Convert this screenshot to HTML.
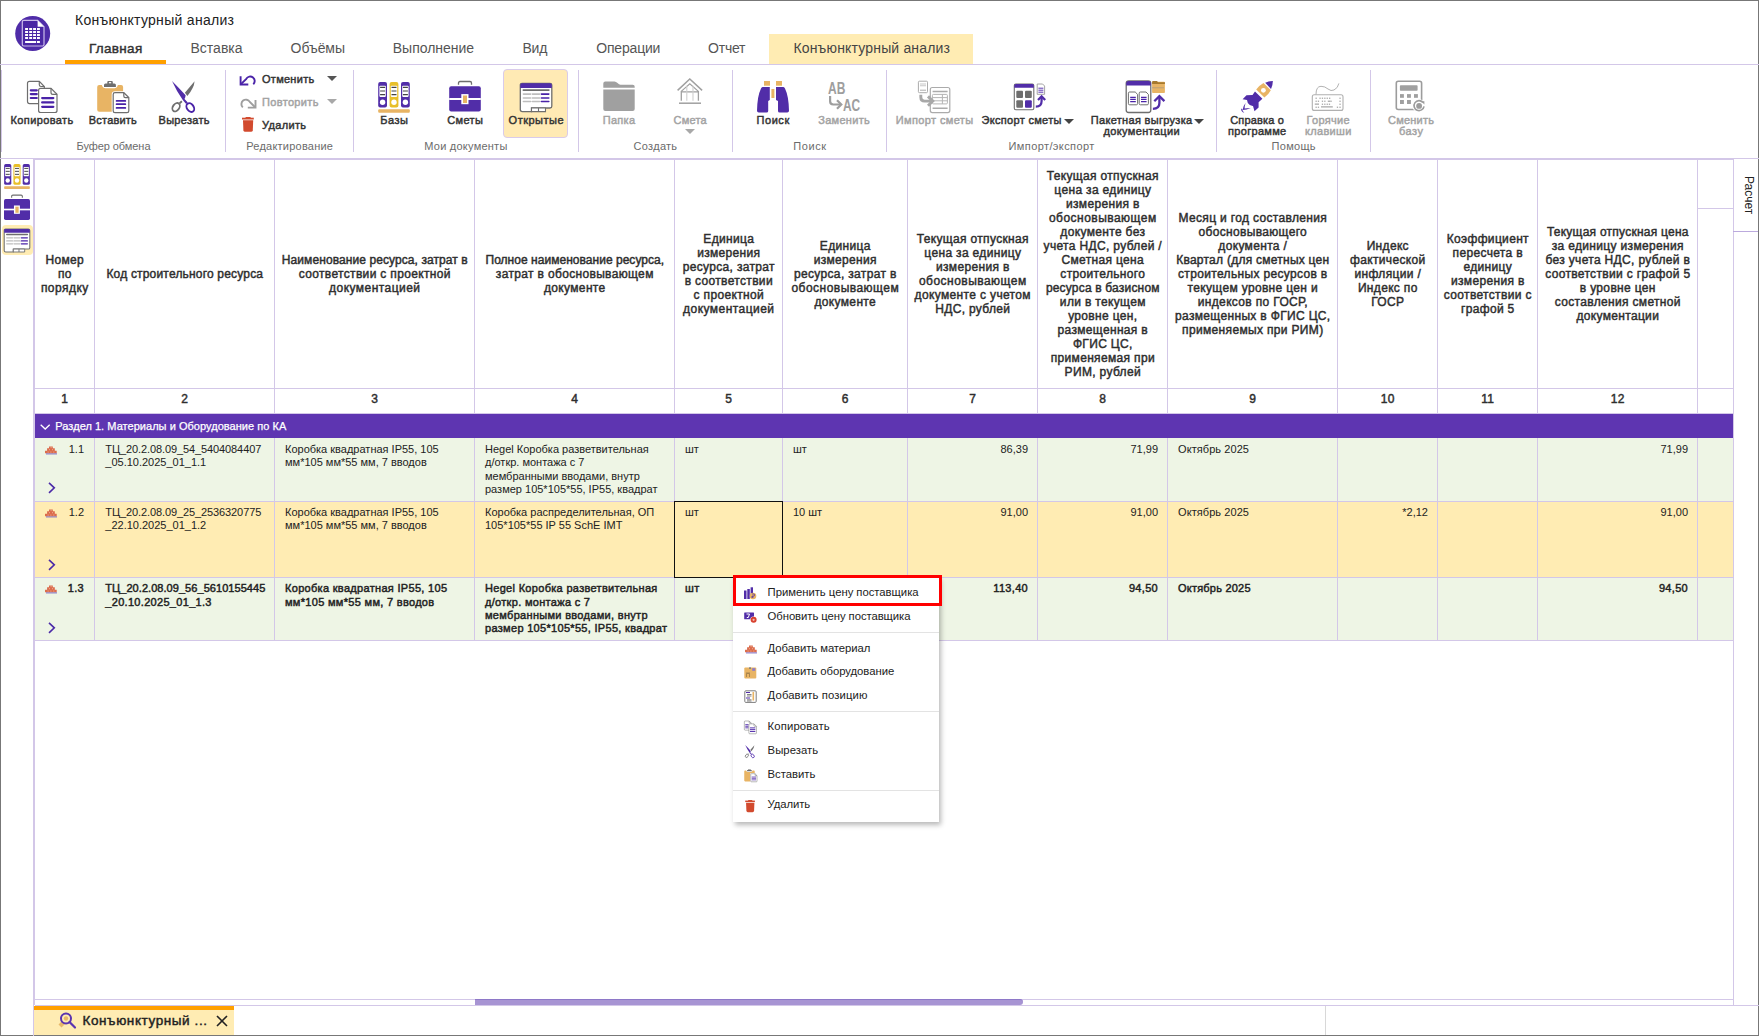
<!DOCTYPE html>
<html><head><meta charset="utf-8"><style>
html,body{margin:0;padding:0;}
body{width:1759px;height:1036px;position:relative;overflow:hidden;background:#fff;font-family:"Liberation Sans", sans-serif;}
</style></head><body>
<div style="position:absolute;left:0px;top:0px;width:1759px;height:1px;background:#777;"></div>
<div style="position:absolute;left:0px;top:0px;width:1px;height:1036px;background:#777;"></div>
<div style="position:absolute;left:1758px;top:0px;width:1px;height:1036px;background:#777;"></div>
<div style="position:absolute;left:0px;top:1035px;width:1759px;height:1px;background:#777;"></div>
<svg style="position:absolute;left:15px;top:16px" width="36" height="36" viewBox="0 0 36 36">
<circle cx="17.7" cy="17.5" r="17.5" fill="#4F2CA8"/>
<path d="M8.8 4.3 H22.6 L29 10.7 V28.5 Q29 30 27.5 30 H8.8 Q7.3 30 7.3 28.5 V5.8 Q7.3 4.3 8.8 4.3 Z" fill="#4A27A4" stroke="#CBBDEA" stroke-width="1.2"/>
<path d="M22.6 4.3 V10.7 H29 Z" fill="#fff"/>
<g fill="#fff">
<rect x="10.1" y="12" width="2.9" height="2"/><rect x="14.2" y="12" width="2.9" height="2"/><rect x="18.1" y="12" width="2.9" height="2"/><rect x="22" y="12" width="2.9" height="2"/>
<rect x="10.1" y="15" width="2.9" height="2"/><rect x="14.2" y="15" width="2.9" height="2"/><rect x="18.1" y="15" width="2.9" height="2"/><rect x="22" y="15" width="2.9" height="2"/>
<rect x="10.1" y="18" width="2.9" height="2"/><rect x="14.2" y="18" width="2.9" height="2"/><rect x="18.1" y="18" width="2.9" height="2"/><rect x="22" y="18" width="2.9" height="2"/>
<rect x="10.1" y="21" width="2.9" height="2"/><rect x="14.2" y="21" width="2.9" height="2"/><rect x="18.1" y="21" width="2.9" height="2"/><rect x="22" y="21" width="2.9" height="2"/>
<rect x="10.1" y="25" width="11" height="2"/><rect x="22" y="25" width="2.9" height="2"/>
</g></svg>
<div id="t0" style="position:absolute;top:12.25px;font-size:14px;line-height:16.8px;font-weight:400;color:#222;white-space:nowrap;letter-spacing:0.297px;left:75px;"><span>Конъюнктурный анализ</span></div>
<div style="position:absolute;left:65px;top:60px;width:101px;height:4px;background:#FFA000;"></div>
<div style="position:absolute;left:769px;top:34px;width:204px;height:30px;background:#FFECB3;"></div>
<div id="t1" style="position:absolute;top:40.72px;font-size:13.5px;line-height:16.2px;font-weight:400;-webkit-text-stroke:0.45px #333;color:#333;white-space:nowrap;letter-spacing:0.301px;left:89px;"><span>Главная</span></div>
<div id="t2" style="position:absolute;top:40.25px;font-size:14px;line-height:16.8px;font-weight:400;color:#555;white-space:nowrap;letter-spacing:0.009px;left:190.5px;"><span>Вставка</span></div>
<div id="t3" style="position:absolute;top:40.25px;font-size:14px;line-height:16.8px;font-weight:400;color:#555;white-space:nowrap;letter-spacing:-0.054px;left:290.6px;"><span>Объёмы</span></div>
<div id="t4" style="position:absolute;top:40.25px;font-size:14px;line-height:16.8px;font-weight:400;color:#555;white-space:nowrap;letter-spacing:-0.032px;left:392.8px;"><span>Выполнение</span></div>
<div id="t5" style="position:absolute;top:40.25px;font-size:14px;line-height:16.8px;font-weight:400;color:#555;white-space:nowrap;letter-spacing:-0.171px;left:522.4px;"><span>Вид</span></div>
<div id="t6" style="position:absolute;top:40.25px;font-size:14px;line-height:16.8px;font-weight:400;color:#555;white-space:nowrap;letter-spacing:-0.200px;left:596.3px;"><span>Операции</span></div>
<div id="t7" style="position:absolute;top:40.25px;font-size:14px;line-height:16.8px;font-weight:400;color:#555;white-space:nowrap;letter-spacing:-0.209px;left:708px;"><span>Отчет</span></div>
<div id="t8" style="position:absolute;top:40.25px;font-size:14px;line-height:16.8px;font-weight:400;color:#444;white-space:nowrap;letter-spacing:0.170px;left:793.4px;"><span>Конъюнктурный анализ</span></div>
<div style="position:absolute;left:0px;top:64px;width:1759px;height:1px;background:#D3C7E8;"></div>
<div style="position:absolute;left:1px;top:70px;width:1px;height:82px;background:#D3C7E8;"></div>
<div style="position:absolute;left:225px;top:70px;width:1px;height:82px;background:#D3C7E8;"></div>
<div style="position:absolute;left:353px;top:70px;width:1px;height:82px;background:#D3C7E8;"></div>
<div style="position:absolute;left:578px;top:70px;width:1px;height:82px;background:#D3C7E8;"></div>
<div style="position:absolute;left:732px;top:70px;width:1px;height:82px;background:#D3C7E8;"></div>
<div style="position:absolute;left:886px;top:70px;width:1px;height:82px;background:#D3C7E8;"></div>
<div style="position:absolute;left:1216px;top:70px;width:1px;height:82px;background:#D3C7E8;"></div>
<div style="position:absolute;left:1370px;top:70px;width:1px;height:82px;background:#D3C7E8;"></div>
<div style="position:absolute;left:0px;top:158px;width:1759px;height:1px;background:#D3C7E8;"></div>
<div style="position:absolute;left:503px;top:69px;width:63px;height:67px;background:#FFEAB4;border:1px solid #D9CBEB;border-radius:4px"></div>
<div id="t9" style="position:absolute;top:114.09px;font-size:11px;line-height:13.2px;font-weight:400;-webkit-text-stroke:0.45px #333;color:#333;white-space:nowrap;letter-spacing:0.373px;left:10.6px;"><span>Копировать</span></div>
<div id="t10" style="position:absolute;top:114.09px;font-size:11px;line-height:13.2px;font-weight:400;-webkit-text-stroke:0.45px #333;color:#333;white-space:nowrap;letter-spacing:0.195px;left:88.8px;"><span>Вставить</span></div>
<div id="t11" style="position:absolute;top:114.09px;font-size:11px;line-height:13.2px;font-weight:400;-webkit-text-stroke:0.45px #333;color:#333;white-space:nowrap;letter-spacing:0.296px;left:158.5px;"><span>Вырезать</span></div>
<div id="t12" style="position:absolute;top:114.09px;font-size:11px;line-height:13.2px;font-weight:400;-webkit-text-stroke:0.45px #333;color:#333;white-space:nowrap;letter-spacing:0.545px;left:380.2px;"><span>Базы</span></div>
<div id="t13" style="position:absolute;top:114.09px;font-size:11px;line-height:13.2px;font-weight:400;-webkit-text-stroke:0.45px #333;color:#333;white-space:nowrap;letter-spacing:0.348px;left:447.2px;"><span>Сметы</span></div>
<div id="t14" style="position:absolute;top:114.09px;font-size:11px;line-height:13.2px;font-weight:400;-webkit-text-stroke:0.45px #333;color:#333;white-space:nowrap;letter-spacing:0.500px;left:508.6px;"><span>Открытые</span></div>
<div id="t15" style="position:absolute;top:114.09px;font-size:11px;line-height:13.2px;font-weight:400;-webkit-text-stroke:0.45px #A3A3A3;color:#A3A3A3;white-space:nowrap;letter-spacing:0.309px;left:602.7px;"><span>Папка</span></div>
<div id="t16" style="position:absolute;top:114.09px;font-size:11px;line-height:13.2px;font-weight:400;-webkit-text-stroke:0.45px #A3A3A3;color:#A3A3A3;white-space:nowrap;letter-spacing:0.175px;left:673.6px;"><span>Смета</span></div>
<div id="t17" style="position:absolute;top:114.09px;font-size:11px;line-height:13.2px;font-weight:400;-webkit-text-stroke:0.45px #333;color:#333;white-space:nowrap;letter-spacing:0.529px;left:756.6px;"><span>Поиск</span></div>
<div id="t18" style="position:absolute;top:114.09px;font-size:11px;line-height:13.2px;font-weight:400;-webkit-text-stroke:0.45px #A3A3A3;color:#A3A3A3;white-space:nowrap;letter-spacing:0.308px;left:818.2px;"><span>Заменить</span></div>
<div id="t19" style="position:absolute;top:114.09px;font-size:11px;line-height:13.2px;font-weight:400;-webkit-text-stroke:0.45px #A3A3A3;color:#A3A3A3;white-space:nowrap;letter-spacing:0.384px;left:895.7px;"><span>Импорт сметы</span></div>
<div id="t20" style="position:absolute;top:114.09px;font-size:11px;line-height:13.2px;font-weight:400;-webkit-text-stroke:0.45px #333;color:#333;white-space:nowrap;letter-spacing:0.304px;left:981.6px;"><span>Экспорт сметы</span></div>
<div id="t21" style="position:absolute;top:114.09px;font-size:11px;line-height:13.2px;font-weight:400;-webkit-text-stroke:0.45px #333;color:#333;white-space:nowrap;letter-spacing:0.311px;left:1090.8px;"><span>Пакетная выгрузка</span></div>
<div id="t22" style="position:absolute;top:114.09px;font-size:11px;line-height:13.2px;font-weight:400;-webkit-text-stroke:0.45px #333;color:#333;white-space:nowrap;letter-spacing:0.184px;left:1230.2px;"><span>Справка о</span></div>
<div id="t23" style="position:absolute;top:114.09px;font-size:11px;line-height:13.2px;font-weight:400;-webkit-text-stroke:0.45px #A3A3A3;color:#A3A3A3;white-space:nowrap;letter-spacing:0.286px;left:1306.6px;"><span>Горячие</span></div>
<div id="t24" style="position:absolute;top:114.09px;font-size:11px;line-height:13.2px;font-weight:400;-webkit-text-stroke:0.45px #A3A3A3;color:#A3A3A3;white-space:nowrap;letter-spacing:0.231px;left:1388px;"><span>Сменить</span></div>
<div id="t25" style="position:absolute;top:125.09px;font-size:11px;line-height:13.2px;font-weight:400;-webkit-text-stroke:0.45px #333;color:#333;white-space:nowrap;letter-spacing:0.342px;left:1103.6px;"><span>документации</span></div>
<div id="t26" style="position:absolute;top:125.09px;font-size:11px;line-height:13.2px;font-weight:400;-webkit-text-stroke:0.45px #333;color:#333;white-space:nowrap;letter-spacing:0.313px;left:1228px;"><span>программе</span></div>
<div id="t27" style="position:absolute;top:125.09px;font-size:11px;line-height:13.2px;font-weight:400;-webkit-text-stroke:0.45px #A3A3A3;color:#A3A3A3;white-space:nowrap;letter-spacing:0.310px;left:1305px;"><span>клавиши</span></div>
<div id="t28" style="position:absolute;top:125.09px;font-size:11px;line-height:13.2px;font-weight:400;-webkit-text-stroke:0.45px #A3A3A3;color:#A3A3A3;white-space:nowrap;letter-spacing:0.511px;left:1399px;"><span>базу</span></div>
<div id="t29" style="position:absolute;top:73.09px;font-size:11px;line-height:13.2px;font-weight:400;-webkit-text-stroke:0.45px #333;color:#333;white-space:nowrap;letter-spacing:0.275px;left:262px;"><span>Отменить</span></div>
<div id="t30" style="position:absolute;top:96.09px;font-size:11px;line-height:13.2px;font-weight:400;-webkit-text-stroke:0.45px #A3A3A3;color:#A3A3A3;white-space:nowrap;letter-spacing:0.338px;left:262px;"><span>Повторить</span></div>
<div id="t31" style="position:absolute;top:118.79px;font-size:11px;line-height:13.2px;font-weight:400;-webkit-text-stroke:0.45px #333;color:#333;white-space:nowrap;letter-spacing:0.333px;left:262px;"><span>Удалить</span></div>
<div id="t32" style="position:absolute;top:139.59px;font-size:11px;line-height:13.2px;font-weight:400;color:#6B6B6B;white-space:nowrap;letter-spacing:-0.068px;left:76.5px;"><span>Буфер обмена</span></div>
<div id="t33" style="position:absolute;top:139.59px;font-size:11px;line-height:13.2px;font-weight:400;color:#6B6B6B;white-space:nowrap;letter-spacing:0.223px;left:246.3px;"><span>Редактирование</span></div>
<div id="t34" style="position:absolute;top:139.59px;font-size:11px;line-height:13.2px;font-weight:400;color:#6B6B6B;white-space:nowrap;letter-spacing:0.237px;left:424.3px;"><span>Мои документы</span></div>
<div id="t35" style="position:absolute;top:139.59px;font-size:11px;line-height:13.2px;font-weight:400;color:#6B6B6B;white-space:nowrap;letter-spacing:0.281px;left:633.6px;"><span>Создать</span></div>
<div id="t36" style="position:absolute;top:139.59px;font-size:11px;line-height:13.2px;font-weight:400;color:#6B6B6B;white-space:nowrap;letter-spacing:0.576px;left:793.3px;"><span>Поиск</span></div>
<div id="t37" style="position:absolute;top:139.59px;font-size:11px;line-height:13.2px;font-weight:400;color:#6B6B6B;white-space:nowrap;letter-spacing:0.403px;left:1008.5px;"><span>Импорт/экспорт</span></div>
<div id="t38" style="position:absolute;top:139.59px;font-size:11px;line-height:13.2px;font-weight:400;color:#6B6B6B;white-space:nowrap;letter-spacing:0.301px;left:1271.6px;"><span>Помощь</span></div>
<svg style="position:absolute;left:327px;top:76px" width="10" height="5"><path d="M0 0 H10 L5.0 5 Z" fill="#555"/></svg>
<svg style="position:absolute;left:327px;top:99px" width="10" height="5"><path d="M0 0 H10 L5.0 5 Z" fill="#A8A8A8"/></svg>
<svg style="position:absolute;left:685px;top:129px" width="10" height="5"><path d="M0 0 H10 L5.0 5 Z" fill="#A8A8A8"/></svg>
<svg style="position:absolute;left:1064px;top:118.5px" width="10" height="5"><path d="M0 0 H10 L5.0 5 Z" fill="#444"/></svg>
<svg style="position:absolute;left:1194px;top:118.5px" width="10" height="5"><path d="M0 0 H10 L5.0 5 Z" fill="#444"/></svg>
<svg style="position:absolute;left:24px;top:78px;overflow:visible" width="38" height="38" viewBox="0 0 38 38"><path d="M5.5 3.3 H15.3 L20.3 8.5 V23.7 Q20.3 25.6 18.4 25.6 H5.5 Q3.5 25.6 3.5 23.6 V5.3 Q3.5 3.3 5.5 3.3 Z" fill="#fff" stroke="#6E6E6E" stroke-width="1.2"/>
<path d="M15.3 3.3 V6.8 Q15.3 8.5 17 8.5 H20.3" fill="none" stroke="#6E6E6E" stroke-width="1.2"/>
<path d="M6.8 12.3 H12.8 M6.8 16.1 H12.8 M6.8 20 H12.8" stroke="#4A23A8" stroke-width="2.2" stroke-linecap="round"/>
<path d="M16.6 10.3 H27 L33 16.3 V32.5 Q33 34.5 31 34.5 H16.6 Q14.6 34.5 14.6 32.5 V12.3 Q14.6 10.3 16.6 10.3 Z" fill="#fff" stroke="#6E6E6E" stroke-width="1.2"/>
<path d="M27 10.3 V14.4 Q27 16.3 28.9 16.3 H33" fill="none" stroke="#6E6E6E" stroke-width="1.2"/>
<path d="M18.2 20.1 H29.3 M18.2 24.4 H29.3 M18.2 28.8 H29.3" stroke="#4A23A8" stroke-width="2.3" stroke-linecap="round"/></svg>
<svg style="position:absolute;left:93px;top:78px;overflow:visible" width="38" height="38" viewBox="0 0 38 38"><path d="M6.2 7 H8.8 Q10 10.3 12.5 10.3 H21.3 Q23.8 10.3 24.9 7 H28.1 Q30.1 7 30.1 9 V33.7 H6.2 Q4.2 33.7 4.2 31.7 V9 Q4.2 7 6.2 7 Z" fill="#E8B464"/>
<path d="M11 8.9 V7 Q11 5.5 12.5 5.5 H14.3 V4.1 Q14.3 3.1 15.3 3.1 H18.8 Q19.8 3.1 19.8 4.1 V5.5 H21.4 Q22.9 5.5 22.9 7 V8.9 Z" fill="#6E6E6E"/>
<rect x="15.9" y="4.1" width="2.3" height="1.2" fill="#fff"/>
<path d="M22 14.7 H30.8 L35.8 19.6 V33 Q35.8 34.7 34 34.7 H22 Q20.2 34.7 20.2 33 V16.5 Q20.2 14.7 22 14.7 Z" fill="#fff" stroke="#fff" stroke-width="3"/>
<path d="M22 14.7 H30.8 L35.8 19.6 V33 Q35.8 34.7 34 34.7 H22 Q20.2 34.7 20.2 33 V16.5 Q20.2 14.7 22 14.7 Z" fill="#fff" stroke="#6E6E6E" stroke-width="1.2"/>
<path d="M30.8 14.7 V18 Q30.8 19.6 32.4 19.6 H35.8" fill="none" stroke="#6E6E6E" stroke-width="1.2"/>
<path d="M23.6 22.9 H32.3 M23.6 26.2 H32.3 M23.6 29.9 H32.3" stroke="#4A23A8" stroke-width="1.8" stroke-linecap="round"/></svg>
<svg style="position:absolute;left:164px;top:78px;overflow:visible" width="38" height="38" viewBox="0 0 38 38"><path d="M8 3 Q15 10 21.6 17.3 Q21.5 19.3 20.5 20.9 L23.8 24.5 L22.1 26 L18.8 22 Q12.5 13 8 3 Z" fill="#512DA8"/>
<ellipse cx="26.3" cy="29.6" rx="3.4" ry="4.7" transform="rotate(-35 26.3 29.6)" fill="none" stroke="#4A23A8" stroke-width="1.9"/>
<path d="M30.6 3.2 Q30.2 9.5 23.4 18 L20.9 14.7 Z" fill="#6E6E6E"/>
<ellipse cx="12.1" cy="29.2" rx="3.2" ry="4.6" transform="rotate(35 12.1 29.2)" fill="none" stroke="#6E6E6E" stroke-width="1.8"/>
<path d="M15.6 25.3 L17.9 23.3" stroke="#6E6E6E" stroke-width="1.9"/></svg>
<svg style="position:absolute;left:236px;top:70px;overflow:visible" width="24" height="66" viewBox="0 0 24 66"><path d="M4.6 6.2 V14.5 H12.3" fill="none" stroke="#4A23A8" stroke-width="1.9"/>
<path d="M5.2 13.9 L10.3 8.8 A4.5 4.5 0 1 1 17.3 14.3" fill="none" stroke="#4A23A8" stroke-width="1.9"/>
<path d="M19.5 30 V37.6 H11.8" fill="none" stroke="#9E9E9E" stroke-width="1.9"/>
<path d="M18.9 37 L13.8 31.9 A4.5 4.5 0 1 0 6.8 37.4" fill="none" stroke="#9E9E9E" stroke-width="1.9"/><path d="M6 48.6 H17.8" stroke="#D24A2E" stroke-width="1.8"/><path d="M9.6 47.8 H14.6" stroke="#D24A2E" stroke-width="1.6"/>
<path d="M7 50.3 H17.2 L16.8 60.2 Q16.6 61.8 15 61.8 H9.2 Q7.6 61.8 7.4 60.2 Z" fill="#D24A2E"/></svg>
<svg style="position:absolute;left:374px;top:78px;overflow:visible" width="38" height="38" viewBox="0 0 38 38"><rect x="4.2" y="4" width="8.8" height="25.5" rx="2" fill="#512DA8"/>
<rect x="5.4" y="7.7" width="6.4" height="11.2" rx="0.8" fill="#fff"/>
<path d="M6.1 9.4 H11.100000000000001 M6.1 13 H11.100000000000001 M6.1 16.7 H11.100000000000001" stroke="#444" stroke-width="1.2"/>
<circle cx="8.600000000000001" cy="24.2" r="2.7" fill="#fff"/><rect x="15.6" y="4" width="8.8" height="25.5" rx="2" fill="#E8BF2A"/>
<rect x="16.8" y="7.7" width="6.4" height="11.2" rx="0.8" fill="#fff"/>
<path d="M17.5 9.4 H22.5 M17.5 13 H22.5 M17.5 16.7 H22.5" stroke="#444" stroke-width="1.2"/>
<circle cx="20.0" cy="24.2" r="2.7" fill="#fff"/><rect x="27" y="4" width="8.8" height="25.5" rx="2" fill="#512DA8"/>
<rect x="28.2" y="7.7" width="6.4" height="11.2" rx="0.8" fill="#fff"/>
<path d="M28.9 9.4 H33.9 M28.9 13 H33.9 M28.9 16.7 H33.9" stroke="#444" stroke-width="1.2"/>
<circle cx="31.4" cy="24.2" r="2.7" fill="#fff"/><rect x="4.2" y="31.2" width="31.6" height="3.5" rx="1" fill="#E8B464"/></svg>
<svg style="position:absolute;left:445px;top:78px;overflow:visible" width="38" height="38" viewBox="0 0 38 38"><path d="M13.5 6.8 V5 Q13.5 3.5 15 3.5 H25 Q26.5 3.5 26.5 5 V6.8" fill="none" stroke="#6E6E6E" stroke-width="1.3"/>
<rect x="4.2" y="8.3" width="31.6" height="25.3" rx="2" fill="#512DA8"/>
<rect x="4.2" y="20" width="31.6" height="2" fill="#fff"/>
<rect x="16.3" y="16.1" width="7.2" height="10.1" fill="#fff"/>
<rect x="18" y="17.5" width="4" height="7.5" fill="#E8B464"/></svg>
<svg style="position:absolute;left:517px;top:78px;overflow:visible" width="38" height="38" viewBox="0 0 38 38"><path d="M5 5.3 H33 Q34.8 5.3 34.8 7 V28.3 Q34.8 30 33 30 H14.5 V33.6 H5.3 Q3.3 33.6 3.3 31.8 V7 Q3.3 5.3 5 5.3 Z" fill="#fff" stroke="#6E6E6E" stroke-width="1.3"/>
<path d="M14.5 30 H28.5 V33.6 H14.5 Z M21.5 30 V33.6" fill="#fff" stroke="#6E6E6E" stroke-width="1.1"/>
<path d="M3.3 9.9 V7 Q3.3 5.3 5 5.3 H33 Q34.8 5.3 34.8 7 V9.9 Z" fill="#512DA8"/>
<path d="M6.4 12.1 H31.8" stroke="#6E6E6E" stroke-width="1.8" stroke-linecap="round"/>
<path d="M6.4 16.1 H13.6 M15.4 16.1 H22.6 M6.4 20 H13.6 M15.4 20 H22.6 M6.4 23.5 H13.6 M15.4 23.5 H22.6" stroke="#BDBDBD" stroke-width="1.6" stroke-linecap="round"/>
<path d="M24.4 16.1 H31.8 M24.4 20 H31.8 M24.4 23.5 H31.8" stroke="#4A23A8" stroke-width="1.6" stroke-linecap="round"/></svg>
<svg style="position:absolute;left:600px;top:74px;overflow:visible" width="106" height="40" viewBox="0 0 106 40"><path d="M5.3 7.5 H14.5 Q16 7.5 17.5 9 Q19 10.8 20.5 10.8 H32.7 Q34.7 10.8 34.7 12.8 V13.7 H3.3 V9.5 Q3.3 7.5 5.3 7.5 Z" fill="#A0A0A0"/>
<path d="M3.3 15.6 H34.7 V35 Q34.7 37 32.7 37 H5.3 Q3.3 37 3.3 35 Z" fill="#A0A0A0"/><path d="M77.6 16.4 L89.8 5 L102.1 16.4" fill="none" stroke="#A0A0A0" stroke-width="1.5"/>
<path d="M81.2 17.4 L89.8 9.7 L98.4 17.4 M81 17.9 H98.6" fill="none" stroke="#A0A0A0" stroke-width="1.2"/>
<path d="M81.3 17 V26.8 M98.4 17 V26.8" stroke="#A0A0A0" stroke-width="1.3"/>
<path d="M86.8 11.8 V26.8 M93 11.8 V26.8" stroke="#CFCFCF" stroke-width="1.1"/>
<path d="M79 29.2 H101" stroke="#A0A0A0" stroke-width="1.5"/></svg>
<svg style="position:absolute;left:752px;top:76px;overflow:visible" width="114" height="40" viewBox="0 0 114 40"><rect x="12" y="5" width="6" height="4.7" fill="#E8B464"/><rect x="24" y="5" width="6" height="4.7" fill="#E8B464"/>
<rect x="19.4" y="13" width="3" height="9" fill="#E8B464"/>
<path d="M10.6 11 H17.8 V24 L16.2 25 V35 Q16.2 36.6 14.5 36.6 H6.8 Q5 36.6 5 34.8 Q5.3 20 9 12.5 Q9.5 11 10.6 11 Z" fill="#512DA8"/>
<path d="M31.4 11 H24 V24 L26 25 V35 Q26 36.6 27.7 36.6 H35.3 Q37 36.6 37 34.8 Q36.7 20 33 12.5 Q32.5 11 31.4 11 Z" fill="#512DA8"/><text x="76" y="17.9" font-family="Liberation Sans" font-weight="700" font-size="16" textLength="17.3" lengthAdjust="spacingAndGlyphs" fill="#9E9E9E">AB</text>
<text x="91" y="35" font-family="Liberation Sans" font-weight="700" font-size="16" textLength="17.2" lengthAdjust="spacingAndGlyphs" fill="#9E9E9E">AC</text>
<path d="M78.1 20 V25.3 Q78.1 28.5 81.3 28.5 H89" fill="none" stroke="#9E9E9E" stroke-width="2.2"/>
<path d="M85 24.2 L89.3 28.5 L85 32.8" fill="none" stroke="#9E9E9E" stroke-width="2.2"/></svg>
<svg style="position:absolute;left:914px;top:76px;overflow:visible" width="140" height="40" viewBox="0 0 140 40"><rect x="4.4" y="5.2" width="9.1" height="11.5" rx="1" fill="#fff" stroke="#ABABAB" stroke-width="1"/>
<path d="M6 8 H12 M6 9.8 H12" stroke="#C8C8C8" stroke-width="1.1"/><path d="M6 14.2 H12" stroke="#ABABAB" stroke-width="1"/>
<rect x="16.3" y="11.5" width="19.5" height="25.1" rx="2" fill="#fff" stroke="#ABABAB" stroke-width="1.2"/>
<path d="M18.6 15.5 H33.6 M18.6 32.3 H33.6" stroke="#ABABAB" stroke-width="1.4"/>
<rect x="18.4" y="18.4" width="15" height="9.5" rx="1" fill="none" stroke="#B5B5B5" stroke-width="1"/>
<path d="M18.4 21.6 H33.4 M18.4 24.8 H33.4 M28.4 18.4 V27.9" stroke="#B5B5B5" stroke-width="1"/>
<path d="M6.8 18.8 V21.3 Q6.8 25.1 10.6 25.1 H18.2" fill="none" stroke="#fff" stroke-width="4.6"/>
<path d="M6.8 18.8 V21.3 Q6.8 25.1 10.6 25.1 H18.2" fill="none" stroke="#A8A8A8" stroke-width="2.9"/>
<path d="M14 20.4 L18.8 25.1 L14 29.8" fill="none" stroke="#A8A8A8" stroke-width="2.9"/><rect x="100.3" y="8" width="19.5" height="25.8" rx="1.5" fill="#fff" stroke="#6E6E6E" stroke-width="1.1"/>
<path d="M100.3 11.8 V9.5 Q100.3 8 101.8 8 H118.3 Q119.8 8 119.8 9.5 V11.8 Z" fill="#512DA8"/>
<rect x="102.3" y="14.7" width="6.7" height="7.2" rx="1" fill="#6E6E6E"/><rect x="111" y="14.7" width="6.8" height="7.2" rx="1" fill="#6E6E6E"/>
<rect x="102.3" y="24.3" width="6.7" height="7.5" rx="1" fill="#6E6E6E"/><rect x="111" y="24.3" width="6.8" height="7.5" rx="1" fill="#512DA8"/>
<path d="M123.2 8 H128.6 L130.6 10 V18.3 H123.2 Z" fill="#fff" stroke="#9A9A9A" stroke-width="0.9"/>
<path d="M124.4 12.2 H129.4 M124.4 14.2 H129.4 M124.4 16.2 H129.4" stroke="#4A23A8" stroke-width="0.9"/>
<path d="M121.8 30.7 Q127.6 30.7 127.6 25 V21" fill="none" stroke="#512DA8" stroke-width="2.2"/>
<path d="M124 24 L127.6 20.4 L131.2 24" fill="none" stroke="#512DA8" stroke-width="2.2"/></svg>
<svg style="position:absolute;left:1122px;top:76px;overflow:visible" width="50" height="40" viewBox="0 0 50 40"><rect x="4.2" y="5" width="24.6" height="31.5" rx="2.5" fill="#fff" stroke="#6E6E6E" stroke-width="1.3"/>
<path d="M4.2 9.6 V7.5 Q4.2 5 6.7 5 H26.3 Q28.8 5 28.8 7.5 V9.6 Z" fill="#512DA8"/>
<path d="M7.6 16 H13.2 L15.6 18.4 V27.6 Q15.6 28.8 14.4 28.8 H7.6 Q6.4 28.8 6.4 27.6 V17.2 Q6.4 16 7.6 16 Z" fill="#fff" stroke="#6E6E6E" stroke-width="1"/>
<path d="M18.4 16 H24 L26.4 18.4 V27.6 Q26.4 28.8 25.2 28.8 H18.4 Q17.2 28.8 17.2 27.6 V17.2 Q17.2 16 18.4 16 Z" fill="#fff" stroke="#6E6E6E" stroke-width="1"/>
<path d="M8.2 21.4 H13.8 M8.2 23.4 H13.8 M8.2 25.6 H13.8 M19 21.4 H24.6 M19 23.4 H24.6 M19 25.6 H24.6" stroke="#4A23A8" stroke-width="1.2"/>
<rect x="30.1" y="5.8" width="12.8" height="11.2" rx="0.8" fill="#E8B464"/>
<path d="M30.1 8 V6 Q30.1 5 31 5 H35 L36 6.3 H42.9 V8 Z" fill="#A6792E"/>
<path d="M30.5 11.8 H42.5" stroke="#8A8A8A" stroke-width="1" stroke-dasharray="1 1"/>
<path d="M30.9 32.8 Q37.4 32.8 37.4 27 V21" fill="none" stroke="#512DA8" stroke-width="2.3"/>
<path d="M32.3 25.2 L37.4 20.1 L42.4 25.1" fill="none" stroke="#512DA8" stroke-width="2.3"/></svg>
<svg style="position:absolute;left:1236px;top:76px;overflow:visible" width="50" height="40" viewBox="0 0 50 40"><path d="M29.2 6.8 Q33 5 36.9 5 Q36.8 9.5 35 12.9 Z" fill="#512DA8"/>
<path d="M20.2 13.6 Q23 9.5 27.5 7 L34.8 14.2 Q32.4 18.7 28.4 21.6 Z" fill="#E8B464"/>
<circle cx="27.4" cy="14.3" r="2.4" fill="#fff"/>
<path d="M19 15.4 L26.4 22.8 L22.6 26.2 L22.6 31.5 L18.5 35.2 L17 30 Q14 30.2 11.8 27 L11 24 L6.6 23.2 L10.5 19.3 L16.5 19 Z" fill="#512DA8"/>
<path d="M9.6 27 Q7 30 6.6 34 Q10.5 33.6 14.8 31.9 Q10.5 32.2 8.6 32.4 Q8.6 29.8 9.6 27 Z" fill="#512DA8"/>
<path d="M5.2 32.8 Q4.9 35.8 8.3 36.8 Q6.4 35.3 6.1 32.8 Z" fill="#512DA8"/></svg>
<svg style="position:absolute;left:1306px;top:76px;overflow:visible" width="130" height="40" viewBox="0 0 130 40"><rect x="6.3" y="18.8" width="30.7" height="15.6" rx="2" fill="#fff" stroke="#B0B0B0" stroke-width="1.1"/>
<path d="M10 18.5 Q10 10.3 15 10.3 Q19 10.3 22 13 Q25 15.5 28 14 Q32 12 32.9 7.4" fill="none" stroke="#A8A8A8" stroke-width="0.9"/><rect x="9.5" y="21.6" width="1.3" height="1.3" fill="#A8A8A8"/><rect x="13.4" y="21.6" width="1.3" height="1.3" fill="#A8A8A8"/><rect x="15.8" y="21.6" width="1.3" height="1.3" fill="#A8A8A8"/><rect x="18.2" y="21.6" width="1.3" height="1.3" fill="#A8A8A8"/><rect x="20.6" y="21.6" width="1.3" height="1.3" fill="#A8A8A8"/><rect x="23" y="21.6" width="1.3" height="1.3" fill="#A8A8A8"/><rect x="33.4" y="21.6" width="1.3" height="1.3" fill="#A8A8A8"/><rect x="9.5" y="24.6" width="1.3" height="1.3" fill="#A8A8A8"/><rect x="11.8" y="24.6" width="1.3" height="1.3" fill="#A8A8A8"/><rect x="15.8" y="24.6" width="1.3" height="1.3" fill="#A8A8A8"/><rect x="18.2" y="24.6" width="1.3" height="1.3" fill="#A8A8A8"/><rect x="21.8" y="24.6" width="1.3" height="1.3" fill="#A8A8A8"/><rect x="23" y="24.6" width="1.3" height="1.3" fill="#A8A8A8"/><rect x="24.4" y="24.6" width="1.3" height="1.3" fill="#A8A8A8"/><rect x="33.4" y="24.6" width="1.3" height="1.3" fill="#A8A8A8"/><rect x="15.8" y="27.6" width="1.3" height="1.3" fill="#A8A8A8"/><rect x="18.2" y="27.6" width="1.3" height="1.3" fill="#A8A8A8"/><rect x="20.6" y="27.6" width="1.3" height="1.3" fill="#A8A8A8"/><rect x="22.8" y="27.6" width="1.3" height="1.3" fill="#A8A8A8"/><rect x="33.4" y="27.6" width="1.3" height="1.3" fill="#A8A8A8"/><rect x="9.5" y="30.6" width="1.3" height="1.3" fill="#A8A8A8"/><rect x="11.8" y="30.6" width="1.3" height="1.3" fill="#A8A8A8"/><rect x="30.8" y="30.6" width="1.3" height="1.3" fill="#A8A8A8"/><rect x="33.4" y="30.6" width="1.3" height="1.3" fill="#A8A8A8"/><path d="M8.8 28.2 H13 M15 30.9 H26.8" stroke="#A8A8A8" stroke-width="1.2"/><rect x="90.3" y="5.3" width="25.3" height="28.2" rx="2" fill="#fff" stroke="#9C9C9C" stroke-width="1.6"/>
<rect x="93.9" y="9.2" width="17.7" height="5.6" rx="0.8" fill="#A0A0A0"/>
<rect x="94" y="18.1" width="3.9" height="3.7" fill="#A0A0A0"/><rect x="101" y="18.1" width="3.9" height="3.7" fill="#A0A0A0"/><rect x="108" y="18.1" width="3.9" height="3.7" fill="#A0A0A0"/>
<rect x="94" y="24" width="3.9" height="4" fill="#A0A0A0"/><rect x="101" y="24" width="3.9" height="4" fill="#A0A0A0"/>
<circle cx="113.1" cy="29.9" r="6.6" fill="#fff"/>
<path d="M116.9 26.4 A5 5 0 1 0 118 30.3" fill="none" stroke="#9C9C9C" stroke-width="1.6"/>
<path d="M115.2 25.2 L118.4 25.2 L118.4 28.4 Z" fill="#9C9C9C"/>
<circle cx="113.1" cy="29.9" r="2.9" fill="#9C9C9C"/></svg>
<div style="position:absolute;left:2px;top:225px;width:31px;height:30px;background:#FFECB3;border-radius:4px;"></div>
<svg style="position:absolute;left:4px;top:164px;overflow:visible" width="26" height="25" viewBox="4.2 4 31.6 30.7"><rect x="4.2" y="4" width="8.8" height="25.5" rx="2" fill="#512DA8"/>
<rect x="5.4" y="7.7" width="6.4" height="11.2" rx="0.8" fill="#fff"/>
<path d="M6.1 9.4 H11.100000000000001 M6.1 13 H11.100000000000001 M6.1 16.7 H11.100000000000001" stroke="#444" stroke-width="1.2"/>
<circle cx="8.600000000000001" cy="24.2" r="2.7" fill="#fff"/><rect x="15.6" y="4" width="8.8" height="25.5" rx="2" fill="#E8BF2A"/>
<rect x="16.8" y="7.7" width="6.4" height="11.2" rx="0.8" fill="#fff"/>
<path d="M17.5 9.4 H22.5 M17.5 13 H22.5 M17.5 16.7 H22.5" stroke="#444" stroke-width="1.2"/>
<circle cx="20.0" cy="24.2" r="2.7" fill="#fff"/><rect x="27" y="4" width="8.8" height="25.5" rx="2" fill="#512DA8"/>
<rect x="28.2" y="7.7" width="6.4" height="11.2" rx="0.8" fill="#fff"/>
<path d="M28.9 9.4 H33.9 M28.9 13 H33.9 M28.9 16.7 H33.9" stroke="#444" stroke-width="1.2"/>
<circle cx="31.4" cy="24.2" r="2.7" fill="#fff"/><rect x="4.2" y="31.2" width="31.6" height="3.5" rx="1" fill="#E8B464"/></svg>
<svg style="position:absolute;left:4px;top:195px;overflow:visible" width="26" height="25" viewBox="4.2 3.5 31.6 30.1"><path d="M13.5 6.8 V5 Q13.5 3.5 15 3.5 H25 Q26.5 3.5 26.5 5 V6.8" fill="none" stroke="#6E6E6E" stroke-width="1.3"/>
<rect x="4.2" y="8.3" width="31.6" height="25.3" rx="2" fill="#512DA8"/>
<rect x="4.2" y="20" width="31.6" height="2" fill="#fff"/>
<rect x="16.3" y="16.1" width="7.2" height="10.1" fill="#fff"/>
<rect x="18" y="17.5" width="4" height="7.5" fill="#E8B464"/></svg>
<svg style="position:absolute;left:4px;top:229px;overflow:visible" width="26" height="23" viewBox="3.3 5.3 31.5 28.3"><path d="M5 5.3 H33 Q34.8 5.3 34.8 7 V28.3 Q34.8 30 33 30 H14.5 V33.6 H5.3 Q3.3 33.6 3.3 31.8 V7 Q3.3 5.3 5 5.3 Z" fill="#fff" stroke="#6E6E6E" stroke-width="1.3"/>
<path d="M14.5 30 H28.5 V33.6 H14.5 Z M21.5 30 V33.6" fill="#fff" stroke="#6E6E6E" stroke-width="1.1"/>
<path d="M3.3 9.9 V7 Q3.3 5.3 5 5.3 H33 Q34.8 5.3 34.8 7 V9.9 Z" fill="#512DA8"/>
<path d="M6.4 12.1 H31.8" stroke="#6E6E6E" stroke-width="1.8" stroke-linecap="round"/>
<path d="M6.4 16.1 H13.6 M15.4 16.1 H22.6 M6.4 20 H13.6 M15.4 20 H22.6 M6.4 23.5 H13.6 M15.4 23.5 H22.6" stroke="#BDBDBD" stroke-width="1.6" stroke-linecap="round"/>
<path d="M24.4 16.1 H31.8 M24.4 20 H31.8 M24.4 23.5 H31.8" stroke="#4A23A8" stroke-width="1.6" stroke-linecap="round"/></svg>
<div style="position:absolute;left:33px;top:158px;width:1700px;height:2px;background:#D3C7E8;"></div>
<div style="position:absolute;left:33px;top:158px;width:2px;height:847px;background:#D3C7E8;"></div>
<div style="position:absolute;left:1733px;top:158px;width:1px;height:847px;background:#D3C7E8;"></div>
<div style="position:absolute;left:35px;top:414px;width:1698px;height:24px;background:#5E35B1;"></div>
<div style="position:absolute;left:35px;top:438px;width:1698px;height:63px;background:#EEF5E5;"></div>
<div style="position:absolute;left:35px;top:501px;width:1698px;height:76px;background:#FFECB3;"></div>
<div style="position:absolute;left:35px;top:577px;width:1698px;height:64px;background:#EEF5E5;"></div>
<div style="position:absolute;left:94px;top:160px;width:1px;height:254px;background:#D3C7E8;"></div>
<div style="position:absolute;left:94px;top:438px;width:1px;height:203px;background:#D3C7E8;"></div>
<div style="position:absolute;left:274px;top:160px;width:1px;height:254px;background:#D3C7E8;"></div>
<div style="position:absolute;left:274px;top:438px;width:1px;height:203px;background:#D3C7E8;"></div>
<div style="position:absolute;left:474px;top:160px;width:1px;height:254px;background:#D3C7E8;"></div>
<div style="position:absolute;left:474px;top:438px;width:1px;height:203px;background:#D3C7E8;"></div>
<div style="position:absolute;left:674px;top:160px;width:1px;height:254px;background:#D3C7E8;"></div>
<div style="position:absolute;left:674px;top:438px;width:1px;height:203px;background:#D3C7E8;"></div>
<div style="position:absolute;left:782px;top:160px;width:1px;height:254px;background:#D3C7E8;"></div>
<div style="position:absolute;left:782px;top:438px;width:1px;height:203px;background:#D3C7E8;"></div>
<div style="position:absolute;left:907px;top:160px;width:1px;height:254px;background:#D3C7E8;"></div>
<div style="position:absolute;left:907px;top:438px;width:1px;height:203px;background:#D3C7E8;"></div>
<div style="position:absolute;left:1037px;top:160px;width:1px;height:254px;background:#D3C7E8;"></div>
<div style="position:absolute;left:1037px;top:438px;width:1px;height:203px;background:#D3C7E8;"></div>
<div style="position:absolute;left:1167px;top:160px;width:1px;height:254px;background:#D3C7E8;"></div>
<div style="position:absolute;left:1167px;top:438px;width:1px;height:203px;background:#D3C7E8;"></div>
<div style="position:absolute;left:1337px;top:160px;width:1px;height:254px;background:#D3C7E8;"></div>
<div style="position:absolute;left:1337px;top:438px;width:1px;height:203px;background:#D3C7E8;"></div>
<div style="position:absolute;left:1437px;top:160px;width:1px;height:254px;background:#D3C7E8;"></div>
<div style="position:absolute;left:1437px;top:438px;width:1px;height:203px;background:#D3C7E8;"></div>
<div style="position:absolute;left:1537px;top:160px;width:1px;height:254px;background:#D3C7E8;"></div>
<div style="position:absolute;left:1537px;top:438px;width:1px;height:203px;background:#D3C7E8;"></div>
<div style="position:absolute;left:1697px;top:160px;width:1px;height:254px;background:#D3C7E8;"></div>
<div style="position:absolute;left:1697px;top:438px;width:1px;height:203px;background:#D3C7E8;"></div>
<div style="position:absolute;left:1697px;top:208px;width:36px;height:1px;background:#D3C7E8;"></div>
<div style="position:absolute;left:35px;top:388px;width:1698px;height:1px;background:#D3C7E8;"></div>
<div style="position:absolute;left:35px;top:413px;width:1698px;height:1px;background:#D3C7E8;"></div>
<div style="position:absolute;left:35px;top:501px;width:1698px;height:1px;background:#D3C7E8;"></div>
<div style="position:absolute;left:35px;top:577px;width:1698px;height:1px;background:#D3C7E8;"></div>
<div style="position:absolute;left:35px;top:640px;width:1698px;height:1px;background:#D3C7E8;"></div>
<div style="position:absolute;left:674px;top:501px;width:107px;height:75px;border:1px solid #111"></div>
<div id="t39" style="position:absolute;top:253.14px;font-size:12px;line-height:14.4px;font-weight:400;-webkit-text-stroke:0.45px #2E2E2E;color:#2E2E2E;white-space:nowrap;letter-spacing:0.290px;left:-235.2px;width:600px;text-align:center;"><span>Номер</span></div>
<div id="t40" style="position:absolute;top:267.14px;font-size:12px;line-height:14.4px;font-weight:400;-webkit-text-stroke:0.45px #2E2E2E;color:#2E2E2E;white-space:nowrap;letter-spacing:0.336px;left:-235.2px;width:600px;text-align:center;"><span>по</span></div>
<div id="t41" style="position:absolute;top:281.14px;font-size:12px;line-height:14.4px;font-weight:400;-webkit-text-stroke:0.45px #2E2E2E;color:#2E2E2E;white-space:nowrap;letter-spacing:0.467px;left:-235.2px;width:600px;text-align:center;"><span>порядку</span></div>
<div id="t42" style="position:absolute;top:267.14px;font-size:12px;line-height:14.4px;font-weight:400;-webkit-text-stroke:0.45px #2E2E2E;color:#2E2E2E;white-space:nowrap;letter-spacing:0.185px;left:-115.19999999999999px;width:600px;text-align:center;"><span>Код строительного ресурса</span></div>
<div id="t43" style="position:absolute;top:253.14px;font-size:12px;line-height:14.4px;font-weight:400;-webkit-text-stroke:0.45px #2E2E2E;color:#2E2E2E;white-space:nowrap;letter-spacing:0.085px;left:74.80000000000001px;width:600px;text-align:center;"><span>Наименование ресурса, затрат в</span></div>
<div id="t44" style="position:absolute;top:267.14px;font-size:12px;line-height:14.4px;font-weight:400;-webkit-text-stroke:0.45px #2E2E2E;color:#2E2E2E;white-space:nowrap;letter-spacing:0.336px;left:74.80000000000001px;width:600px;text-align:center;"><span>соответствии с проектной</span></div>
<div id="t45" style="position:absolute;top:281.14px;font-size:12px;line-height:14.4px;font-weight:400;-webkit-text-stroke:0.45px #2E2E2E;color:#2E2E2E;white-space:nowrap;letter-spacing:0.453px;left:74.80000000000001px;width:600px;text-align:center;"><span>документацией</span></div>
<div id="t46" style="position:absolute;top:253.14px;font-size:12px;line-height:14.4px;font-weight:400;-webkit-text-stroke:0.45px #2E2E2E;color:#2E2E2E;white-space:nowrap;letter-spacing:0.032px;left:274.79999999999995px;width:600px;text-align:center;"><span>Полное наименование ресурса,</span></div>
<div id="t47" style="position:absolute;top:267.14px;font-size:12px;line-height:14.4px;font-weight:400;-webkit-text-stroke:0.45px #2E2E2E;color:#2E2E2E;white-space:nowrap;letter-spacing:0.336px;left:274.79999999999995px;width:600px;text-align:center;"><span>затрат в обосновывающем</span></div>
<div id="t48" style="position:absolute;top:281.14px;font-size:12px;line-height:14.4px;font-weight:400;-webkit-text-stroke:0.45px #2E2E2E;color:#2E2E2E;white-space:nowrap;letter-spacing:0.336px;left:274.79999999999995px;width:600px;text-align:center;"><span>документе</span></div>
<div id="t49" style="position:absolute;top:232.14px;font-size:12px;line-height:14.4px;font-weight:400;-webkit-text-stroke:0.45px #2E2E2E;color:#2E2E2E;white-space:nowrap;letter-spacing:0.336px;left:428.79999999999995px;width:600px;text-align:center;"><span>Единица</span></div>
<div id="t50" style="position:absolute;top:246.14px;font-size:12px;line-height:14.4px;font-weight:400;-webkit-text-stroke:0.45px #2E2E2E;color:#2E2E2E;white-space:nowrap;letter-spacing:0.336px;left:428.79999999999995px;width:600px;text-align:center;"><span>измерения</span></div>
<div id="t51" style="position:absolute;top:260.14px;font-size:12px;line-height:14.4px;font-weight:400;-webkit-text-stroke:0.45px #2E2E2E;color:#2E2E2E;white-space:nowrap;letter-spacing:0.336px;left:428.79999999999995px;width:600px;text-align:center;"><span>ресурса, затрат</span></div>
<div id="t52" style="position:absolute;top:274.14px;font-size:12px;line-height:14.4px;font-weight:400;-webkit-text-stroke:0.45px #2E2E2E;color:#2E2E2E;white-space:nowrap;letter-spacing:0.336px;left:428.79999999999995px;width:600px;text-align:center;"><span>в соответствии</span></div>
<div id="t53" style="position:absolute;top:288.14px;font-size:12px;line-height:14.4px;font-weight:400;-webkit-text-stroke:0.45px #2E2E2E;color:#2E2E2E;white-space:nowrap;letter-spacing:0.336px;left:428.79999999999995px;width:600px;text-align:center;"><span>с проектной</span></div>
<div id="t54" style="position:absolute;top:302.14px;font-size:12px;line-height:14.4px;font-weight:400;-webkit-text-stroke:0.45px #2E2E2E;color:#2E2E2E;white-space:nowrap;letter-spacing:0.453px;left:428.79999999999995px;width:600px;text-align:center;"><span>документацией</span></div>
<div id="t55" style="position:absolute;top:239.14px;font-size:12px;line-height:14.4px;font-weight:400;-webkit-text-stroke:0.45px #2E2E2E;color:#2E2E2E;white-space:nowrap;letter-spacing:0.336px;left:545.3px;width:600px;text-align:center;"><span>Единица</span></div>
<div id="t56" style="position:absolute;top:253.14px;font-size:12px;line-height:14.4px;font-weight:400;-webkit-text-stroke:0.45px #2E2E2E;color:#2E2E2E;white-space:nowrap;letter-spacing:0.336px;left:545.3px;width:600px;text-align:center;"><span>измерения</span></div>
<div id="t57" style="position:absolute;top:267.14px;font-size:12px;line-height:14.4px;font-weight:400;-webkit-text-stroke:0.45px #2E2E2E;color:#2E2E2E;white-space:nowrap;letter-spacing:0.336px;left:545.3px;width:600px;text-align:center;"><span>ресурса, затрат в</span></div>
<div id="t58" style="position:absolute;top:281.14px;font-size:12px;line-height:14.4px;font-weight:400;-webkit-text-stroke:0.45px #2E2E2E;color:#2E2E2E;white-space:nowrap;letter-spacing:0.477px;left:545.3px;width:600px;text-align:center;"><span>обосновывающем</span></div>
<div id="t59" style="position:absolute;top:295.14px;font-size:12px;line-height:14.4px;font-weight:400;-webkit-text-stroke:0.45px #2E2E2E;color:#2E2E2E;white-space:nowrap;letter-spacing:0.336px;left:545.3px;width:600px;text-align:center;"><span>документе</span></div>
<div id="t60" style="position:absolute;top:232.14px;font-size:12px;line-height:14.4px;font-weight:400;-webkit-text-stroke:0.45px #2E2E2E;color:#2E2E2E;white-space:nowrap;letter-spacing:0.336px;left:672.8px;width:600px;text-align:center;"><span>Текущая отпускная</span></div>
<div id="t61" style="position:absolute;top:246.14px;font-size:12px;line-height:14.4px;font-weight:400;-webkit-text-stroke:0.45px #2E2E2E;color:#2E2E2E;white-space:nowrap;letter-spacing:0.336px;left:672.8px;width:600px;text-align:center;"><span>цена за единицу</span></div>
<div id="t62" style="position:absolute;top:260.14px;font-size:12px;line-height:14.4px;font-weight:400;-webkit-text-stroke:0.45px #2E2E2E;color:#2E2E2E;white-space:nowrap;letter-spacing:0.336px;left:672.8px;width:600px;text-align:center;"><span>измерения в</span></div>
<div id="t63" style="position:absolute;top:274.14px;font-size:12px;line-height:14.4px;font-weight:400;-webkit-text-stroke:0.45px #2E2E2E;color:#2E2E2E;white-space:nowrap;letter-spacing:0.477px;left:672.8px;width:600px;text-align:center;"><span>обосновывающем</span></div>
<div id="t64" style="position:absolute;top:288.14px;font-size:12px;line-height:14.4px;font-weight:400;-webkit-text-stroke:0.45px #2E2E2E;color:#2E2E2E;white-space:nowrap;letter-spacing:0.353px;left:672.8px;width:600px;text-align:center;"><span>документе с учетом</span></div>
<div id="t65" style="position:absolute;top:302.14px;font-size:12px;line-height:14.4px;font-weight:400;-webkit-text-stroke:0.45px #2E2E2E;color:#2E2E2E;white-space:nowrap;letter-spacing:0.336px;left:672.8px;width:600px;text-align:center;"><span>НДС, рублей</span></div>
<div id="t66" style="position:absolute;top:169.14px;font-size:12px;line-height:14.4px;font-weight:400;-webkit-text-stroke:0.45px #2E2E2E;color:#2E2E2E;white-space:nowrap;letter-spacing:0.336px;left:802.8px;width:600px;text-align:center;"><span>Текущая отпускная</span></div>
<div id="t67" style="position:absolute;top:183.14px;font-size:12px;line-height:14.4px;font-weight:400;-webkit-text-stroke:0.45px #2E2E2E;color:#2E2E2E;white-space:nowrap;letter-spacing:0.336px;left:802.8px;width:600px;text-align:center;"><span>цена за единицу</span></div>
<div id="t68" style="position:absolute;top:197.14px;font-size:12px;line-height:14.4px;font-weight:400;-webkit-text-stroke:0.45px #2E2E2E;color:#2E2E2E;white-space:nowrap;letter-spacing:0.336px;left:802.8px;width:600px;text-align:center;"><span>измерения в</span></div>
<div id="t69" style="position:absolute;top:211.14px;font-size:12px;line-height:14.4px;font-weight:400;-webkit-text-stroke:0.45px #2E2E2E;color:#2E2E2E;white-space:nowrap;letter-spacing:0.477px;left:802.8px;width:600px;text-align:center;"><span>обосновывающем</span></div>
<div id="t70" style="position:absolute;top:225.14px;font-size:12px;line-height:14.4px;font-weight:400;-webkit-text-stroke:0.45px #2E2E2E;color:#2E2E2E;white-space:nowrap;letter-spacing:0.336px;left:802.8px;width:600px;text-align:center;"><span>документе без</span></div>
<div id="t71" style="position:absolute;top:239.14px;font-size:12px;line-height:14.4px;font-weight:400;-webkit-text-stroke:0.45px #2E2E2E;color:#2E2E2E;white-space:nowrap;letter-spacing:0.336px;left:802.8px;width:600px;text-align:center;"><span>учета НДС, рублей /</span></div>
<div id="t72" style="position:absolute;top:253.14px;font-size:12px;line-height:14.4px;font-weight:400;-webkit-text-stroke:0.45px #2E2E2E;color:#2E2E2E;white-space:nowrap;letter-spacing:0.336px;left:802.8px;width:600px;text-align:center;"><span>Сметная цена</span></div>
<div id="t73" style="position:absolute;top:267.14px;font-size:12px;line-height:14.4px;font-weight:400;-webkit-text-stroke:0.45px #2E2E2E;color:#2E2E2E;white-space:nowrap;letter-spacing:0.336px;left:802.8px;width:600px;text-align:center;"><span>строительного</span></div>
<div id="t74" style="position:absolute;top:281.14px;font-size:12px;line-height:14.4px;font-weight:400;-webkit-text-stroke:0.45px #2E2E2E;color:#2E2E2E;white-space:nowrap;letter-spacing:0.182px;left:802.8px;width:600px;text-align:center;"><span>ресурса в базисном</span></div>
<div id="t75" style="position:absolute;top:295.14px;font-size:12px;line-height:14.4px;font-weight:400;-webkit-text-stroke:0.45px #2E2E2E;color:#2E2E2E;white-space:nowrap;letter-spacing:0.336px;left:802.8px;width:600px;text-align:center;"><span>или в текущем</span></div>
<div id="t76" style="position:absolute;top:309.14px;font-size:12px;line-height:14.4px;font-weight:400;-webkit-text-stroke:0.45px #2E2E2E;color:#2E2E2E;white-space:nowrap;letter-spacing:0.336px;left:802.8px;width:600px;text-align:center;"><span>уровне цен,</span></div>
<div id="t77" style="position:absolute;top:323.14px;font-size:12px;line-height:14.4px;font-weight:400;-webkit-text-stroke:0.45px #2E2E2E;color:#2E2E2E;white-space:nowrap;letter-spacing:0.336px;left:802.8px;width:600px;text-align:center;"><span>размещенная в</span></div>
<div id="t78" style="position:absolute;top:337.14px;font-size:12px;line-height:14.4px;font-weight:400;-webkit-text-stroke:0.45px #2E2E2E;color:#2E2E2E;white-space:nowrap;letter-spacing:0.336px;left:802.8px;width:600px;text-align:center;"><span>ФГИС ЦС,</span></div>
<div id="t79" style="position:absolute;top:351.14px;font-size:12px;line-height:14.4px;font-weight:400;-webkit-text-stroke:0.45px #2E2E2E;color:#2E2E2E;white-space:nowrap;letter-spacing:0.336px;left:802.8px;width:600px;text-align:center;"><span>применяемая при</span></div>
<div id="t80" style="position:absolute;top:365.14px;font-size:12px;line-height:14.4px;font-weight:400;-webkit-text-stroke:0.45px #2E2E2E;color:#2E2E2E;white-space:nowrap;letter-spacing:0.336px;left:802.8px;width:600px;text-align:center;"><span>РИМ, рублей</span></div>
<div id="t81" style="position:absolute;top:211.14px;font-size:12px;line-height:14.4px;font-weight:400;-webkit-text-stroke:0.45px #2E2E2E;color:#2E2E2E;white-space:nowrap;letter-spacing:0.336px;left:952.8px;width:600px;text-align:center;"><span>Месяц и год составления</span></div>
<div id="t82" style="position:absolute;top:225.14px;font-size:12px;line-height:14.4px;font-weight:400;-webkit-text-stroke:0.45px #2E2E2E;color:#2E2E2E;white-space:nowrap;letter-spacing:0.336px;left:952.8px;width:600px;text-align:center;"><span>обосновывающего</span></div>
<div id="t83" style="position:absolute;top:239.14px;font-size:12px;line-height:14.4px;font-weight:400;-webkit-text-stroke:0.45px #2E2E2E;color:#2E2E2E;white-space:nowrap;letter-spacing:0.336px;left:952.8px;width:600px;text-align:center;"><span>документа /</span></div>
<div id="t84" style="position:absolute;top:253.14px;font-size:12px;line-height:14.4px;font-weight:400;-webkit-text-stroke:0.45px #2E2E2E;color:#2E2E2E;white-space:nowrap;letter-spacing:0.253px;left:952.8px;width:600px;text-align:center;"><span>Квартал (для сметных цен</span></div>
<div id="t85" style="position:absolute;top:267.14px;font-size:12px;line-height:14.4px;font-weight:400;-webkit-text-stroke:0.45px #2E2E2E;color:#2E2E2E;white-space:nowrap;letter-spacing:0.336px;left:952.8px;width:600px;text-align:center;"><span>строительных ресурсов в</span></div>
<div id="t86" style="position:absolute;top:281.14px;font-size:12px;line-height:14.4px;font-weight:400;-webkit-text-stroke:0.45px #2E2E2E;color:#2E2E2E;white-space:nowrap;letter-spacing:0.336px;left:952.8px;width:600px;text-align:center;"><span>текущем уровне цен и</span></div>
<div id="t87" style="position:absolute;top:295.14px;font-size:12px;line-height:14.4px;font-weight:400;-webkit-text-stroke:0.45px #2E2E2E;color:#2E2E2E;white-space:nowrap;letter-spacing:0.336px;left:952.8px;width:600px;text-align:center;"><span>индексов по ГОСР,</span></div>
<div id="t88" style="position:absolute;top:309.14px;font-size:12px;line-height:14.4px;font-weight:400;-webkit-text-stroke:0.45px #2E2E2E;color:#2E2E2E;white-space:nowrap;letter-spacing:0.336px;left:952.8px;width:600px;text-align:center;"><span>размещенных в ФГИС ЦС,</span></div>
<div id="t89" style="position:absolute;top:323.14px;font-size:12px;line-height:14.4px;font-weight:400;-webkit-text-stroke:0.45px #2E2E2E;color:#2E2E2E;white-space:nowrap;letter-spacing:0.336px;left:952.8px;width:600px;text-align:center;"><span>применяемых при РИМ)</span></div>
<div id="t90" style="position:absolute;top:239.14px;font-size:12px;line-height:14.4px;font-weight:400;-webkit-text-stroke:0.45px #2E2E2E;color:#2E2E2E;white-space:nowrap;letter-spacing:0.336px;left:1087.8px;width:600px;text-align:center;"><span>Индекс</span></div>
<div id="t91" style="position:absolute;top:253.14px;font-size:12px;line-height:14.4px;font-weight:400;-webkit-text-stroke:0.45px #2E2E2E;color:#2E2E2E;white-space:nowrap;letter-spacing:0.348px;left:1087.8px;width:600px;text-align:center;"><span>фактической</span></div>
<div id="t92" style="position:absolute;top:267.14px;font-size:12px;line-height:14.4px;font-weight:400;-webkit-text-stroke:0.45px #2E2E2E;color:#2E2E2E;white-space:nowrap;letter-spacing:0.336px;left:1087.8px;width:600px;text-align:center;"><span>инфляции /</span></div>
<div id="t93" style="position:absolute;top:281.14px;font-size:12px;line-height:14.4px;font-weight:400;-webkit-text-stroke:0.45px #2E2E2E;color:#2E2E2E;white-space:nowrap;letter-spacing:0.336px;left:1087.8px;width:600px;text-align:center;"><span>Индекс по</span></div>
<div id="t94" style="position:absolute;top:295.14px;font-size:12px;line-height:14.4px;font-weight:400;-webkit-text-stroke:0.45px #2E2E2E;color:#2E2E2E;white-space:nowrap;letter-spacing:0.336px;left:1087.8px;width:600px;text-align:center;"><span>ГОСР</span></div>
<div id="t95" style="position:absolute;top:232.14px;font-size:12px;line-height:14.4px;font-weight:400;-webkit-text-stroke:0.45px #2E2E2E;color:#2E2E2E;white-space:nowrap;letter-spacing:0.336px;left:1187.8px;width:600px;text-align:center;"><span>Коэффициент</span></div>
<div id="t96" style="position:absolute;top:246.14px;font-size:12px;line-height:14.4px;font-weight:400;-webkit-text-stroke:0.45px #2E2E2E;color:#2E2E2E;white-space:nowrap;letter-spacing:0.336px;left:1187.8px;width:600px;text-align:center;"><span>пересчета в</span></div>
<div id="t97" style="position:absolute;top:260.14px;font-size:12px;line-height:14.4px;font-weight:400;-webkit-text-stroke:0.45px #2E2E2E;color:#2E2E2E;white-space:nowrap;letter-spacing:0.336px;left:1187.8px;width:600px;text-align:center;"><span>единицу</span></div>
<div id="t98" style="position:absolute;top:274.14px;font-size:12px;line-height:14.4px;font-weight:400;-webkit-text-stroke:0.45px #2E2E2E;color:#2E2E2E;white-space:nowrap;letter-spacing:0.336px;left:1187.8px;width:600px;text-align:center;"><span>измерения в</span></div>
<div id="t99" style="position:absolute;top:288.14px;font-size:12px;line-height:14.4px;font-weight:400;-webkit-text-stroke:0.45px #2E2E2E;color:#2E2E2E;white-space:nowrap;letter-spacing:0.336px;left:1187.8px;width:600px;text-align:center;"><span>соответствии с</span></div>
<div id="t100" style="position:absolute;top:302.14px;font-size:12px;line-height:14.4px;font-weight:400;-webkit-text-stroke:0.45px #2E2E2E;color:#2E2E2E;white-space:nowrap;letter-spacing:0.336px;left:1187.8px;width:600px;text-align:center;"><span>графой 5</span></div>
<div id="t101" style="position:absolute;top:225.14px;font-size:12px;line-height:14.4px;font-weight:400;-webkit-text-stroke:0.45px #2E2E2E;color:#2E2E2E;white-space:nowrap;letter-spacing:0.240px;left:1317.8px;width:600px;text-align:center;"><span>Текущая отпускная цена</span></div>
<div id="t102" style="position:absolute;top:239.14px;font-size:12px;line-height:14.4px;font-weight:400;-webkit-text-stroke:0.45px #2E2E2E;color:#2E2E2E;white-space:nowrap;letter-spacing:0.336px;left:1317.8px;width:600px;text-align:center;"><span>за единицу измерения</span></div>
<div id="t103" style="position:absolute;top:253.14px;font-size:12px;line-height:14.4px;font-weight:400;-webkit-text-stroke:0.45px #2E2E2E;color:#2E2E2E;white-space:nowrap;letter-spacing:0.336px;left:1317.8px;width:600px;text-align:center;"><span>без учета НДС, рублей в</span></div>
<div id="t104" style="position:absolute;top:267.14px;font-size:12px;line-height:14.4px;font-weight:400;-webkit-text-stroke:0.45px #2E2E2E;color:#2E2E2E;white-space:nowrap;letter-spacing:0.336px;left:1317.8px;width:600px;text-align:center;"><span>соответствии с графой 5</span></div>
<div id="t105" style="position:absolute;top:281.14px;font-size:12px;line-height:14.4px;font-weight:400;-webkit-text-stroke:0.45px #2E2E2E;color:#2E2E2E;white-space:nowrap;letter-spacing:0.336px;left:1317.8px;width:600px;text-align:center;"><span>в уровне цен</span></div>
<div id="t106" style="position:absolute;top:295.14px;font-size:12px;line-height:14.4px;font-weight:400;-webkit-text-stroke:0.45px #2E2E2E;color:#2E2E2E;white-space:nowrap;letter-spacing:0.336px;left:1317.8px;width:600px;text-align:center;"><span>составления сметной</span></div>
<div id="t107" style="position:absolute;top:309.14px;font-size:12px;line-height:14.4px;font-weight:400;-webkit-text-stroke:0.45px #2E2E2E;color:#2E2E2E;white-space:nowrap;letter-spacing:0.336px;left:1317.8px;width:600px;text-align:center;"><span>документации</span></div>
<div id="t108" style="position:absolute;top:392.44px;font-size:12px;line-height:14.4px;font-weight:400;-webkit-text-stroke:0.45px #2E2E2E;color:#2E2E2E;white-space:nowrap;letter-spacing:0.336px;left:-235.2px;width:600px;text-align:center;"><span>1</span></div>
<div id="t109" style="position:absolute;top:392.44px;font-size:12px;line-height:14.4px;font-weight:400;-webkit-text-stroke:0.45px #2E2E2E;color:#2E2E2E;white-space:nowrap;letter-spacing:0.336px;left:-115.19999999999999px;width:600px;text-align:center;"><span>2</span></div>
<div id="t110" style="position:absolute;top:392.44px;font-size:12px;line-height:14.4px;font-weight:400;-webkit-text-stroke:0.45px #2E2E2E;color:#2E2E2E;white-space:nowrap;letter-spacing:0.336px;left:74.80000000000001px;width:600px;text-align:center;"><span>3</span></div>
<div id="t111" style="position:absolute;top:392.44px;font-size:12px;line-height:14.4px;font-weight:400;-webkit-text-stroke:0.45px #2E2E2E;color:#2E2E2E;white-space:nowrap;letter-spacing:0.336px;left:274.79999999999995px;width:600px;text-align:center;"><span>4</span></div>
<div id="t112" style="position:absolute;top:392.44px;font-size:12px;line-height:14.4px;font-weight:400;-webkit-text-stroke:0.45px #2E2E2E;color:#2E2E2E;white-space:nowrap;letter-spacing:0.336px;left:428.79999999999995px;width:600px;text-align:center;"><span>5</span></div>
<div id="t113" style="position:absolute;top:392.44px;font-size:12px;line-height:14.4px;font-weight:400;-webkit-text-stroke:0.45px #2E2E2E;color:#2E2E2E;white-space:nowrap;letter-spacing:0.336px;left:545.3px;width:600px;text-align:center;"><span>6</span></div>
<div id="t114" style="position:absolute;top:392.44px;font-size:12px;line-height:14.4px;font-weight:400;-webkit-text-stroke:0.45px #2E2E2E;color:#2E2E2E;white-space:nowrap;letter-spacing:0.336px;left:672.8px;width:600px;text-align:center;"><span>7</span></div>
<div id="t115" style="position:absolute;top:392.44px;font-size:12px;line-height:14.4px;font-weight:400;-webkit-text-stroke:0.45px #2E2E2E;color:#2E2E2E;white-space:nowrap;letter-spacing:0.336px;left:802.8px;width:600px;text-align:center;"><span>8</span></div>
<div id="t116" style="position:absolute;top:392.44px;font-size:12px;line-height:14.4px;font-weight:400;-webkit-text-stroke:0.45px #2E2E2E;color:#2E2E2E;white-space:nowrap;letter-spacing:0.336px;left:952.8px;width:600px;text-align:center;"><span>9</span></div>
<div id="t117" style="position:absolute;top:392.44px;font-size:12px;line-height:14.4px;font-weight:400;-webkit-text-stroke:0.45px #2E2E2E;color:#2E2E2E;white-space:nowrap;letter-spacing:0.336px;left:1087.8px;width:600px;text-align:center;"><span>10</span></div>
<div id="t118" style="position:absolute;top:392.44px;font-size:12px;line-height:14.4px;font-weight:400;-webkit-text-stroke:0.45px #2E2E2E;color:#2E2E2E;white-space:nowrap;letter-spacing:0.336px;left:1187.8px;width:600px;text-align:center;"><span>11</span></div>
<div id="t119" style="position:absolute;top:392.44px;font-size:12px;line-height:14.4px;font-weight:400;-webkit-text-stroke:0.45px #2E2E2E;color:#2E2E2E;white-space:nowrap;letter-spacing:0.336px;left:1317.8px;width:600px;text-align:center;"><span>12</span></div>
<svg style="position:absolute;left:40px;top:424px" width="11" height="6"><path d="M0.7 0.7 L5.2 5 L9.7 0.7" fill="none" stroke="#fff" stroke-width="1.3"/></svg>
<div id="t120" style="position:absolute;top:419.89px;font-size:11px;line-height:13.2px;font-weight:400;color:#fff;white-space:nowrap;letter-spacing:0.037px;-webkit-text-stroke:0.25px #fff;left:55.3px;"><span>Раздел 1. Материалы и Оборудование по КА</span></div>
<svg style="position:absolute;left:45px;top:445.5px;overflow:visible" width="12" height="9" viewBox="0 0 12 9"><path d="M4 0.4 H7.8 V2.3 H9.8 V4.8 H11.7 V7.3 H0 V4.8 H2.1 V2.3 H4 Z" fill="#DB6C4C"/><rect x="5.6" y="1.2" width="1" height="0.9" fill="#F0B9A2"/><rect x="4.0" y="3.3" width="1" height="0.9" fill="#F0B9A2"/><rect x="7.0" y="3.3" width="1" height="0.9" fill="#F0B9A2"/><rect x="2.6" y="5.6" width="1" height="0.9" fill="#F0B9A2"/><rect x="5.4" y="5.6" width="1" height="0.9" fill="#F0B9A2"/><rect x="8.3" y="5.6" width="1" height="0.9" fill="#F0B9A2"/><rect x="1" y="7.4" width="11" height="1" fill="#7E6BC0"/></svg>
<svg style="position:absolute;left:48px;top:482px" width="8" height="12"><path d="M1 0.8 L6.3 5.8 L1 10.8" fill="none" stroke="#4B2AA8" stroke-width="1.6"/></svg>
<div id="t121" style="position:absolute;top:443.09px;font-size:11px;line-height:13.2px;font-weight:400;color:#222;white-space:nowrap;letter-spacing:0.000px;left:-516px;width:600px;text-align:right;"><span>1.1</span></div>
<div id="t122" style="position:absolute;top:443.09px;font-size:11px;line-height:13.2px;font-weight:400;color:#222;white-space:nowrap;letter-spacing:-0.101px;left:105.3px;"><span>ТЦ_20.2.08.09_54_5404084407</span></div>
<div id="t123" style="position:absolute;top:456.39px;font-size:11px;line-height:13.2px;font-weight:400;color:#222;white-space:nowrap;letter-spacing:0.000px;left:105.3px;"><span>_05.10.2025_01_1.1</span></div>
<div id="t124" style="position:absolute;top:443.09px;font-size:11px;line-height:13.2px;font-weight:400;color:#222;white-space:nowrap;letter-spacing:0.000px;left:285px;"><span>Коробка квадратная IP55, 105</span></div>
<div id="t125" style="position:absolute;top:456.39px;font-size:11px;line-height:13.2px;font-weight:400;color:#222;white-space:nowrap;letter-spacing:0.000px;left:285px;"><span>мм*105 мм*55 мм, 7 вводов</span></div>
<div id="t126" style="position:absolute;top:443.09px;font-size:11px;line-height:13.2px;font-weight:400;color:#222;white-space:nowrap;letter-spacing:0.000px;left:485px;"><span>Hegel Коробка разветвительная</span></div>
<div id="t127" style="position:absolute;top:456.39px;font-size:11px;line-height:13.2px;font-weight:400;color:#222;white-space:nowrap;letter-spacing:0.000px;left:485px;"><span>д/откр. монтажа с 7</span></div>
<div id="t128" style="position:absolute;top:469.69px;font-size:11px;line-height:13.2px;font-weight:400;color:#222;white-space:nowrap;letter-spacing:0.000px;left:485px;"><span>мембранными вводами, внутр</span></div>
<div id="t129" style="position:absolute;top:482.99px;font-size:11px;line-height:13.2px;font-weight:400;color:#222;white-space:nowrap;letter-spacing:0.000px;left:485px;"><span>размер 105*105*55, IP55, квадрат</span></div>
<div id="t130" style="position:absolute;top:443.09px;font-size:11px;line-height:13.2px;font-weight:400;color:#222;white-space:nowrap;letter-spacing:0.000px;left:685px;"><span>шт</span></div>
<div id="t131" style="position:absolute;top:443.09px;font-size:11px;line-height:13.2px;font-weight:400;color:#222;white-space:nowrap;letter-spacing:0.000px;left:793px;"><span>шт</span></div>
<div id="t132" style="position:absolute;top:443.09px;font-size:11px;line-height:13.2px;font-weight:400;color:#222;white-space:nowrap;letter-spacing:0.000px;left:428px;width:600px;text-align:right;"><span>86,39</span></div>
<div id="t133" style="position:absolute;top:443.09px;font-size:11px;line-height:13.2px;font-weight:400;color:#222;white-space:nowrap;letter-spacing:0.000px;left:558px;width:600px;text-align:right;"><span>71,99</span></div>
<div id="t134" style="position:absolute;top:443.09px;font-size:11px;line-height:13.2px;font-weight:400;color:#222;white-space:nowrap;letter-spacing:0.075px;left:1178px;"><span>Октябрь 2025</span></div>
<div id="t135" style="position:absolute;top:443.09px;font-size:11px;line-height:13.2px;font-weight:400;color:#222;white-space:nowrap;letter-spacing:0.000px;left:1088px;width:600px;text-align:right;"><span>71,99</span></div>
<svg style="position:absolute;left:45px;top:508.5px;overflow:visible" width="12" height="9" viewBox="0 0 12 9"><path d="M4 0.4 H7.8 V2.3 H9.8 V4.8 H11.7 V7.3 H0 V4.8 H2.1 V2.3 H4 Z" fill="#DB6C4C"/><rect x="5.6" y="1.2" width="1" height="0.9" fill="#F0B9A2"/><rect x="4.0" y="3.3" width="1" height="0.9" fill="#F0B9A2"/><rect x="7.0" y="3.3" width="1" height="0.9" fill="#F0B9A2"/><rect x="2.6" y="5.6" width="1" height="0.9" fill="#F0B9A2"/><rect x="5.4" y="5.6" width="1" height="0.9" fill="#F0B9A2"/><rect x="8.3" y="5.6" width="1" height="0.9" fill="#F0B9A2"/><rect x="1" y="7.4" width="11" height="1" fill="#7E6BC0"/></svg>
<svg style="position:absolute;left:48px;top:559px" width="8" height="12"><path d="M1 0.8 L6.3 5.8 L1 10.8" fill="none" stroke="#4B2AA8" stroke-width="1.6"/></svg>
<div id="t136" style="position:absolute;top:506.09px;font-size:11px;line-height:13.2px;font-weight:400;color:#222;white-space:nowrap;letter-spacing:0.000px;left:-516px;width:600px;text-align:right;"><span>1.2</span></div>
<div id="t137" style="position:absolute;top:506.09px;font-size:11px;line-height:13.2px;font-weight:400;color:#222;white-space:nowrap;letter-spacing:-0.101px;left:105.3px;"><span>ТЦ_20.2.08.09_25_2536320775</span></div>
<div id="t138" style="position:absolute;top:519.39px;font-size:11px;line-height:13.2px;font-weight:400;color:#222;white-space:nowrap;letter-spacing:0.000px;left:105.3px;"><span>_22.10.2025_01_1.2</span></div>
<div id="t139" style="position:absolute;top:506.09px;font-size:11px;line-height:13.2px;font-weight:400;color:#222;white-space:nowrap;letter-spacing:0.000px;left:285px;"><span>Коробка квадратная IP55, 105</span></div>
<div id="t140" style="position:absolute;top:519.39px;font-size:11px;line-height:13.2px;font-weight:400;color:#222;white-space:nowrap;letter-spacing:0.000px;left:285px;"><span>мм*105 мм*55 мм, 7 вводов</span></div>
<div id="t141" style="position:absolute;top:506.09px;font-size:11px;line-height:13.2px;font-weight:400;color:#222;white-space:nowrap;letter-spacing:0.000px;left:485px;"><span>Коробка распределительная, ОП</span></div>
<div id="t142" style="position:absolute;top:519.39px;font-size:11px;line-height:13.2px;font-weight:400;color:#222;white-space:nowrap;letter-spacing:0.000px;left:485px;"><span>105*105*55 IP 55 SchE IMT</span></div>
<div id="t143" style="position:absolute;top:506.09px;font-size:11px;line-height:13.2px;font-weight:400;color:#222;white-space:nowrap;letter-spacing:0.000px;left:685px;"><span>шт</span></div>
<div id="t144" style="position:absolute;top:506.09px;font-size:11px;line-height:13.2px;font-weight:400;color:#222;white-space:nowrap;letter-spacing:0.000px;left:793px;"><span>10 шт</span></div>
<div id="t145" style="position:absolute;top:506.09px;font-size:11px;line-height:13.2px;font-weight:400;color:#222;white-space:nowrap;letter-spacing:0.000px;left:428px;width:600px;text-align:right;"><span>91,00</span></div>
<div id="t146" style="position:absolute;top:506.09px;font-size:11px;line-height:13.2px;font-weight:400;color:#222;white-space:nowrap;letter-spacing:0.000px;left:558px;width:600px;text-align:right;"><span>91,00</span></div>
<div id="t147" style="position:absolute;top:506.09px;font-size:11px;line-height:13.2px;font-weight:400;color:#222;white-space:nowrap;letter-spacing:0.075px;left:1178px;"><span>Октябрь 2025</span></div>
<div id="t148" style="position:absolute;top:506.09px;font-size:11px;line-height:13.2px;font-weight:400;color:#222;white-space:nowrap;letter-spacing:0.000px;left:828px;width:600px;text-align:right;"><span>*2,12</span></div>
<div id="t149" style="position:absolute;top:506.09px;font-size:11px;line-height:13.2px;font-weight:400;color:#222;white-space:nowrap;letter-spacing:0.000px;left:1088px;width:600px;text-align:right;"><span>91,00</span></div>
<svg style="position:absolute;left:45px;top:584.9px;overflow:visible" width="12" height="9" viewBox="0 0 12 9"><path d="M4 0.4 H7.8 V2.3 H9.8 V4.8 H11.7 V7.3 H0 V4.8 H2.1 V2.3 H4 Z" fill="#DB6C4C"/><rect x="5.6" y="1.2" width="1" height="0.9" fill="#F0B9A2"/><rect x="4.0" y="3.3" width="1" height="0.9" fill="#F0B9A2"/><rect x="7.0" y="3.3" width="1" height="0.9" fill="#F0B9A2"/><rect x="2.6" y="5.6" width="1" height="0.9" fill="#F0B9A2"/><rect x="5.4" y="5.6" width="1" height="0.9" fill="#F0B9A2"/><rect x="8.3" y="5.6" width="1" height="0.9" fill="#F0B9A2"/><rect x="1" y="7.4" width="11" height="1" fill="#7E6BC0"/></svg>
<svg style="position:absolute;left:48px;top:622px" width="8" height="12"><path d="M1 0.8 L6.3 5.8 L1 10.8" fill="none" stroke="#4B2AA8" stroke-width="1.6"/></svg>
<div id="t150" style="position:absolute;top:582.49px;font-size:11px;line-height:13.2px;font-weight:400;-webkit-text-stroke:0.45px #222;color:#222;white-space:nowrap;letter-spacing:0.308px;left:-516px;width:600px;text-align:right;"><span>1.3</span></div>
<div id="t151" style="position:absolute;top:582.49px;font-size:11px;line-height:13.2px;font-weight:400;-webkit-text-stroke:0.45px #222;color:#222;white-space:nowrap;letter-spacing:0.053px;left:105.3px;"><span>ТЦ_20.2.08.09_56_5610155445</span></div>
<div id="t152" style="position:absolute;top:595.79px;font-size:11px;line-height:13.2px;font-weight:400;-webkit-text-stroke:0.45px #222;color:#222;white-space:nowrap;letter-spacing:0.308px;left:105.3px;"><span>_20.10.2025_01_1.3</span></div>
<div id="t153" style="position:absolute;top:582.49px;font-size:11px;line-height:13.2px;font-weight:400;-webkit-text-stroke:0.45px #222;color:#222;white-space:nowrap;letter-spacing:0.308px;left:285px;"><span>Коробка квадратная IP55, 105</span></div>
<div id="t154" style="position:absolute;top:595.79px;font-size:11px;line-height:13.2px;font-weight:400;-webkit-text-stroke:0.45px #222;color:#222;white-space:nowrap;letter-spacing:0.308px;left:285px;"><span>мм*105 мм*55 мм, 7 вводов</span></div>
<div id="t155" style="position:absolute;top:582.49px;font-size:11px;line-height:13.2px;font-weight:400;-webkit-text-stroke:0.45px #222;color:#222;white-space:nowrap;letter-spacing:0.308px;left:485px;"><span>Hegel Коробка разветвительная</span></div>
<div id="t156" style="position:absolute;top:595.79px;font-size:11px;line-height:13.2px;font-weight:400;-webkit-text-stroke:0.45px #222;color:#222;white-space:nowrap;letter-spacing:0.308px;left:485px;"><span>д/откр. монтажа с 7</span></div>
<div id="t157" style="position:absolute;top:609.09px;font-size:11px;line-height:13.2px;font-weight:400;-webkit-text-stroke:0.45px #222;color:#222;white-space:nowrap;letter-spacing:0.308px;left:485px;"><span>мембранными вводами, внутр</span></div>
<div id="t158" style="position:absolute;top:622.39px;font-size:11px;line-height:13.2px;font-weight:400;-webkit-text-stroke:0.45px #222;color:#222;white-space:nowrap;letter-spacing:0.308px;left:485px;"><span>размер 105*105*55, IP55, квадрат</span></div>
<div id="t159" style="position:absolute;top:582.49px;font-size:11px;line-height:13.2px;font-weight:400;-webkit-text-stroke:0.45px #222;color:#222;white-space:nowrap;letter-spacing:0.308px;left:685px;"><span>шт</span></div>
<div id="t160" style="position:absolute;top:582.49px;font-size:11px;line-height:13.2px;font-weight:400;-webkit-text-stroke:0.45px #222;color:#222;white-space:nowrap;letter-spacing:0.308px;left:428px;width:600px;text-align:right;"><span>113,40</span></div>
<div id="t161" style="position:absolute;top:582.49px;font-size:11px;line-height:13.2px;font-weight:400;-webkit-text-stroke:0.45px #222;color:#222;white-space:nowrap;letter-spacing:0.308px;left:558px;width:600px;text-align:right;"><span>94,50</span></div>
<div id="t162" style="position:absolute;top:582.49px;font-size:11px;line-height:13.2px;font-weight:400;-webkit-text-stroke:0.45px #222;color:#222;white-space:nowrap;letter-spacing:0.212px;left:1178px;"><span>Октябрь 2025</span></div>
<div id="t163" style="position:absolute;top:582.49px;font-size:11px;line-height:13.2px;font-weight:400;-webkit-text-stroke:0.45px #222;color:#222;white-space:nowrap;letter-spacing:0.308px;left:1088px;width:600px;text-align:right;"><span>94,50</span></div>
<div style="position:absolute;left:1733px;top:231px;width:25px;height:1px;background:#BBAADD;"></div>
<div style="position:absolute;left:1742px;top:176px;width:13px;height:40px;writing-mode:vertical-rl;font-size:12px;line-height:13px;color:#222;white-space:nowrap">Расчет</div>
<div style="position:absolute;left:35px;top:999px;width:1698px;height:1px;background:#D3C7E8;"></div>
<div style="position:absolute;left:35px;top:1005px;width:1724px;height:1px;background:#D3C7E8;"></div>
<div style="position:absolute;left:475px;top:999px;width:548px;height:6px;background:#A794D3;border-top:1px solid #8E78C8;box-sizing:border-box;border-radius:0 3px 3px 0"></div>
<div style="position:absolute;left:33px;top:1005px;width:1px;height:31px;background:#D3C7E8;"></div>
<div style="position:absolute;left:34px;top:1006px;width:200px;height:4px;background:#FFA000;"></div>
<div style="position:absolute;left:34px;top:1010px;width:200px;height:25px;background:#FFECB3;"></div>
<div style="position:absolute;left:1325px;top:1006px;width:1px;height:29px;background:#D8D8D8;"></div>
<div id="t164" style="position:absolute;top:1012.72px;font-size:13.5px;line-height:16.2px;font-weight:400;-webkit-text-stroke:0.45px #222;color:#222;white-space:nowrap;letter-spacing:0.591px;left:82.5px;"><span>Конъюнктурный ...</span></div>
<svg style="position:absolute;left:216px;top:1015px" width="12" height="12"><path d="M1 1 L11 11 M11 1 L1 11" stroke="#222" stroke-width="1.6"/></svg>
<svg style="position:absolute;left:57px;top:1012px" width="20" height="18" viewBox="0 0 20 18">
<path d="M1.5 12.5 L5 9 L8 12 L4.5 15.5 Z" fill="#E8B86A"/>
<circle cx="9" cy="6.5" r="5" fill="none" stroke="#5B34B0" stroke-width="2"/>
<circle cx="9" cy="6.5" r="2.2" fill="#E8B86A"/>
<path d="M12.5 10 L18 15.5" stroke="#5B34B0" stroke-width="2.2" stroke-linecap="round"/></svg>
<div style="position:absolute;left:733px;top:577px;width:206px;height:245px;background:#fff;box-shadow:2px 3px 5px rgba(0,0,0,0.28)"></div>
<div style="position:absolute;left:733px;top:632px;width:206px;height:1px;background:#E3E3E3;"></div>
<div style="position:absolute;left:733px;top:711px;width:206px;height:1px;background:#E3E3E3;"></div>
<div style="position:absolute;left:733px;top:790px;width:206px;height:1px;background:#E3E3E3;"></div>
<div id="t165" style="position:absolute;top:586.20px;font-size:11.3px;line-height:13.56px;font-weight:400;color:#222;white-space:nowrap;letter-spacing:-0.026px;left:767.6px;"><span>Применить цену поставщика</span></div>
<div id="t166" style="position:absolute;top:609.80px;font-size:11.3px;line-height:13.56px;font-weight:400;color:#222;white-space:nowrap;letter-spacing:-0.065px;left:767.6px;"><span>Обновить цену поставщика</span></div>
<div id="t167" style="position:absolute;top:641.60px;font-size:11.3px;line-height:13.56px;font-weight:400;color:#222;white-space:nowrap;letter-spacing:-0.054px;left:767.6px;"><span>Добавить материал</span></div>
<div id="t168" style="position:absolute;top:665.20px;font-size:11.3px;line-height:13.56px;font-weight:400;color:#222;white-space:nowrap;letter-spacing:-0.040px;left:767.6px;"><span>Добавить оборудование</span></div>
<div id="t169" style="position:absolute;top:688.90px;font-size:11.3px;line-height:13.56px;font-weight:400;color:#222;white-space:nowrap;letter-spacing:0.115px;left:767.6px;"><span>Добавить позицию</span></div>
<div id="t170" style="position:absolute;top:719.90px;font-size:11.3px;line-height:13.56px;font-weight:400;color:#222;white-space:nowrap;letter-spacing:0.129px;left:767.6px;"><span>Копировать</span></div>
<div id="t171" style="position:absolute;top:743.80px;font-size:11.3px;line-height:13.56px;font-weight:400;color:#222;white-space:nowrap;letter-spacing:0.050px;left:767.6px;"><span>Вырезать</span></div>
<div id="t172" style="position:absolute;top:767.60px;font-size:11.3px;line-height:13.56px;font-weight:400;color:#222;white-space:nowrap;letter-spacing:-0.027px;left:767.6px;"><span>Вставить</span></div>
<div id="t173" style="position:absolute;top:798.40px;font-size:11.3px;line-height:13.56px;font-weight:400;color:#222;white-space:nowrap;letter-spacing:-0.088px;left:767.6px;"><span>Удалить</span></div>
<svg style="position:absolute;left:744px;top:587px;overflow:visible" width="14" height="13" viewBox="0 0 14 13"><rect x="0" y="3.5" width="2.5" height="8.5" fill="#512DA8"/><rect x="3.3" y="2" width="2.5" height="10" fill="#512DA8"/><rect x="6.6" y="0.3" width="2.4" height="8" fill="#512DA8"/><circle cx="9" cy="9" r="3.3" fill="#E8B464"/><path d="M8.2 7 H9.6 Q10.6 7 10.6 8 Q10.6 9 9.6 9 H8.2 V11 M7.6 10 H9.6" fill="none" stroke="#512DA8" stroke-width="0.8"/></svg>
<svg style="position:absolute;left:744px;top:612px;overflow:visible" width="14" height="12" viewBox="0 0 14 12"><rect x="0.2" y="0.5" width="9.8" height="6.7" rx="0.5" fill="#512DA8"/><path d="M2.5 2 H5.5 L4.3 5.5 H2.8" fill="none" stroke="#fff" stroke-width="1"/><circle cx="9.6" cy="7.8" r="3.4" fill="#fff"/><circle cx="9.6" cy="7.8" r="3" fill="#D8412F"/><circle cx="9.6" cy="7.8" r="1.1" fill="#F3B8AE"/></svg>
<svg style="position:absolute;left:744.5px;top:644.5px;overflow:visible" width="12" height="9" viewBox="0 0 12 9"><path d="M4 0.4 H7.8 V2.3 H9.8 V4.8 H11.7 V7.3 H0 V4.8 H2.1 V2.3 H4 Z" fill="#DB6C4C"/><rect x="5.6" y="1.2" width="1" height="0.9" fill="#F0B9A2"/><rect x="4.0" y="3.3" width="1" height="0.9" fill="#F0B9A2"/><rect x="7.0" y="3.3" width="1" height="0.9" fill="#F0B9A2"/><rect x="2.6" y="5.6" width="1" height="0.9" fill="#F0B9A2"/><rect x="5.4" y="5.6" width="1" height="0.9" fill="#F0B9A2"/><rect x="8.3" y="5.6" width="1" height="0.9" fill="#F0B9A2"/><rect x="1" y="7.4" width="11" height="1" fill="#7E6BC0"/></svg>
<svg style="position:absolute;left:744px;top:667px;overflow:visible" width="13" height="12" viewBox="0 0 13 12"><rect x="0.3" y="0.4" width="12" height="11" rx="1" fill="#E8B464"/><rect x="8.2" y="1.2" width="3" height="2.6" fill="#8C7BC9"/><path d="M2.5 10 V6.5 H5.5 V10 M3 6.5 V5 M5 6.5 V5" fill="none" stroke="#9A7A4A" stroke-width="0.8"/><rect x="5" y="0.4" width="2" height="1.4" fill="#7A7A7A"/></svg>
<svg style="position:absolute;left:744px;top:690px;overflow:visible" width="13" height="13" viewBox="0 0 13 13"><rect x="0.8" y="0.8" width="11.4" height="11.6" rx="1" fill="#fff" stroke="#6E6E6E" stroke-width="0.9"/><path d="M2 2.5 H6 M2 8 H6" stroke="#512DA8" stroke-width="1.2"/><path d="M3 4.5 H7.5 M3 6 H7.5 M3 9.8 H7.5 M3 11 H7.5" stroke="#777" stroke-width="0.9"/><path d="M9.3 2 V10.5" stroke="#E8B464" stroke-width="1.6"/></svg>
<svg style="position:absolute;left:744.4px;top:720.9px;overflow:visible" width="12.8" height="12.8" viewBox="3.5 3.3 29.5 31.2"><path d="M5.5 3.3 H15.3 L20.3 8.5 V23.7 Q20.3 25.6 18.4 25.6 H5.5 Q3.5 25.6 3.5 23.6 V5.3 Q3.5 3.3 5.5 3.3 Z" fill="#fff" stroke="#6E6E6E" stroke-width="1.2"/>
<path d="M15.3 3.3 V6.8 Q15.3 8.5 17 8.5 H20.3" fill="none" stroke="#6E6E6E" stroke-width="1.2"/>
<path d="M6.8 12.3 H12.8 M6.8 16.1 H12.8 M6.8 20 H12.8" stroke="#4A23A8" stroke-width="2.2" stroke-linecap="round"/>
<path d="M16.6 10.3 H27 L33 16.3 V32.5 Q33 34.5 31 34.5 H16.6 Q14.6 34.5 14.6 32.5 V12.3 Q14.6 10.3 16.6 10.3 Z" fill="#fff" stroke="#6E6E6E" stroke-width="1.2"/>
<path d="M27 10.3 V14.4 Q27 16.3 28.9 16.3 H33" fill="none" stroke="#6E6E6E" stroke-width="1.2"/>
<path d="M18.2 20.1 H29.3 M18.2 24.4 H29.3 M18.2 28.8 H29.3" stroke="#4A23A8" stroke-width="2.3" stroke-linecap="round"/></svg>
<svg style="position:absolute;left:745.4px;top:745px;overflow:visible" width="9.8" height="12.8" viewBox="7.5 3 24 31"><path d="M8 3 Q15 10 21.6 17.3 Q21.5 19.3 20.5 20.9 L23.8 24.5 L22.1 26 L18.8 22 Q12.5 13 8 3 Z" fill="#512DA8"/>
<ellipse cx="26.3" cy="29.6" rx="3.4" ry="4.7" transform="rotate(-35 26.3 29.6)" fill="none" stroke="#4A23A8" stroke-width="1.9"/>
<path d="M30.6 3.2 Q30.2 9.5 23.4 18 L20.9 14.7 Z" fill="#6E6E6E"/>
<ellipse cx="12.1" cy="29.2" rx="3.2" ry="4.6" transform="rotate(35 12.1 29.2)" fill="none" stroke="#6E6E6E" stroke-width="1.8"/>
<path d="M15.6 25.3 L17.9 23.3" stroke="#6E6E6E" stroke-width="1.9"/></svg>
<svg style="position:absolute;left:743.9px;top:769px;overflow:visible" width="13.3" height="12.8" viewBox="4.2 3.1 31.6 31.6"><path d="M6.2 7 H8.8 Q10 10.3 12.5 10.3 H21.3 Q23.8 10.3 24.9 7 H28.1 Q30.1 7 30.1 9 V33.7 H6.2 Q4.2 33.7 4.2 31.7 V9 Q4.2 7 6.2 7 Z" fill="#E8B464"/>
<path d="M11 8.9 V7 Q11 5.5 12.5 5.5 H14.3 V4.1 Q14.3 3.1 15.3 3.1 H18.8 Q19.8 3.1 19.8 4.1 V5.5 H21.4 Q22.9 5.5 22.9 7 V8.9 Z" fill="#6E6E6E"/>
<rect x="15.9" y="4.1" width="2.3" height="1.2" fill="#fff"/>
<path d="M22 14.7 H30.8 L35.8 19.6 V33 Q35.8 34.7 34 34.7 H22 Q20.2 34.7 20.2 33 V16.5 Q20.2 14.7 22 14.7 Z" fill="#fff" stroke="#fff" stroke-width="3"/>
<path d="M22 14.7 H30.8 L35.8 19.6 V33 Q35.8 34.7 34 34.7 H22 Q20.2 34.7 20.2 33 V16.5 Q20.2 14.7 22 14.7 Z" fill="#fff" stroke="#6E6E6E" stroke-width="1.2"/>
<path d="M30.8 14.7 V18 Q30.8 19.6 32.4 19.6 H35.8" fill="none" stroke="#6E6E6E" stroke-width="1.2"/>
<path d="M23.6 22.9 H32.3 M23.6 26.2 H32.3 M23.6 29.9 H32.3" stroke="#4A23A8" stroke-width="1.8" stroke-linecap="round"/></svg>
<svg style="position:absolute;left:745.4px;top:800px;overflow:visible" width="10.3" height="12.3" viewBox="6 47 12 15"><path d="M6 48.6 H17.8" stroke="#D24A2E" stroke-width="1.8"/><path d="M9.6 47.8 H14.6" stroke="#D24A2E" stroke-width="1.6"/>
<path d="M7 50.3 H17.2 L16.8 60.2 Q16.6 61.8 15 61.8 H9.2 Q7.6 61.8 7.4 60.2 Z" fill="#D24A2E"/></svg>
<div style="position:absolute;left:733px;top:575px;width:203px;height:25px;border:3px solid #FF0000"></div>
</body></html>
